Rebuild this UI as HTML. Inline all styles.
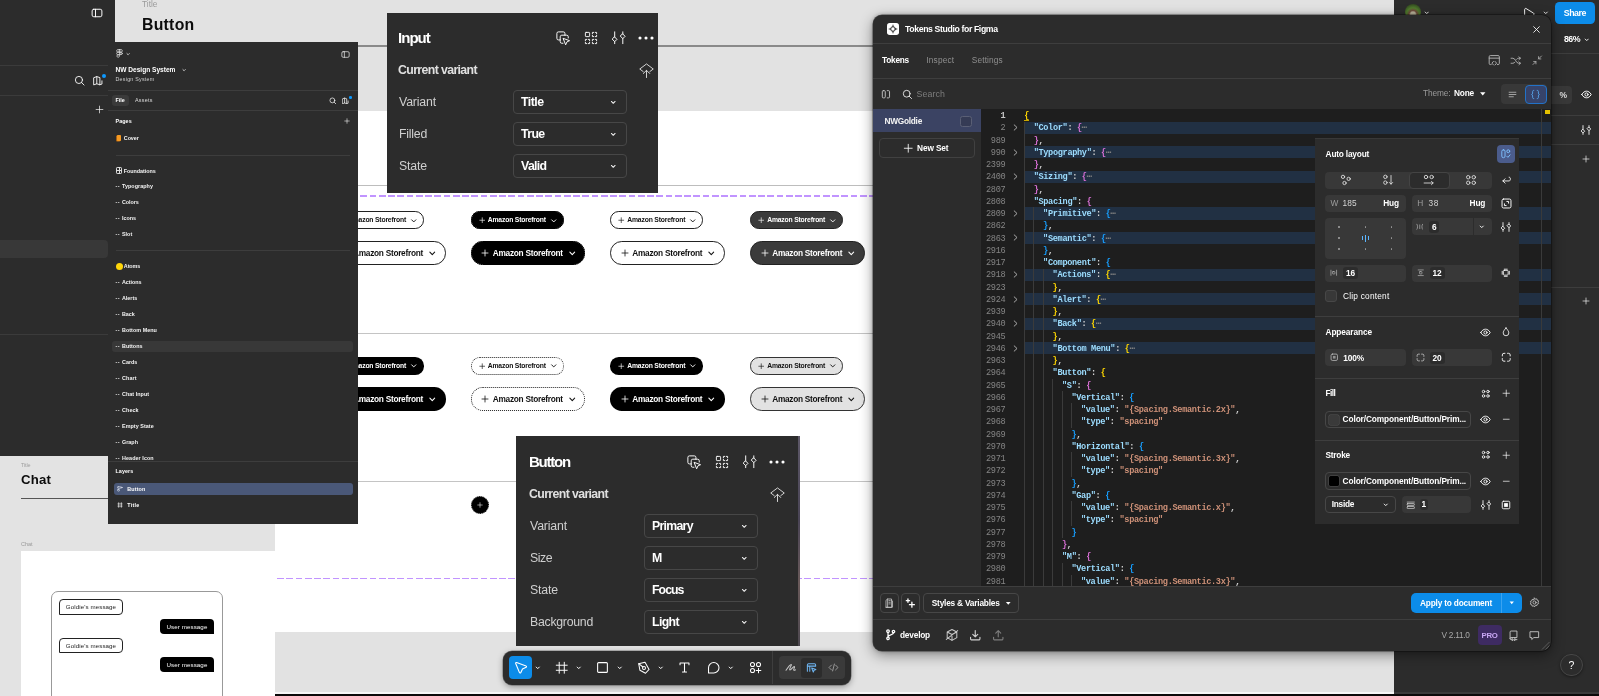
<!DOCTYPE html>
<html lang="en"><head><meta charset="utf-8"><title>Figma – NW Design System – Tokens Studio</title>
<style>
html,body{margin:0;padding:0}
body{width:1599px;height:696px;overflow:hidden;position:relative;background:#e2e2e2;font-family:"Liberation Sans",sans-serif;-webkit-font-smoothing:antialiased}
body div,body span,body svg{position:absolute}
span{white-space:pre;display:block}
#main,#bl,#lp,#ip,#bp,#tb,#tk,#al{left:0;top:0;width:0;height:0;will-change:transform}
.ln{left:0;width:100%;height:12.25px}
.m{font-family:"Liberation Mono","DejaVu Sans Mono",monospace;font-size:8.6px;letter-spacing:-.34px;line-height:12.25px;top:.9px;font-weight:700}
.m.n{font-weight:400}
.m i{font-style:normal}
</style></head><body>
<div id="main">
<div style="left:0px;top:0px;width:115px;height:456px;background:#2c2c2c"></div>
<div style="left:0px;top:65px;width:108px;height:1px;background:#3b3b3b"></div>
<div style="left:0px;top:95px;width:108px;height:1px;background:#3b3b3b"></div>
<div style="left:0px;top:240px;width:108px;height:18px;background:#383838;border-radius:0 4px 4px 0"></div>
<div style="left:0px;top:334px;width:108px;height:1px;background:#3b3b3b"></div>
<svg style="left:91.00px;top:7.00px;color:#fff;" width="12" height="12" viewBox="0 0 16 16" fill="none" stroke="currentColor" stroke-width="1.3" stroke-linecap="round" stroke-linejoin="round"><rect x="1.5" y="3" width="13" height="10" rx="2.2"/><path d="M6 3v10"/></svg>
<svg style="left:73.50px;top:75.00px;color:#fff;" width="11" height="11" viewBox="0 0 16 16" fill="none" stroke="currentColor" stroke-width="1.3" stroke-linecap="round" stroke-linejoin="round"><circle cx="7.2" cy="7.2" r="5.2"/><path d="M11 11l3.600 3.600"/></svg>
<svg style="left:93.00px;top:75.00px;color:#fff;" width="11" height="11" viewBox="0 0 16 16" fill="none" stroke="currentColor" stroke-width="1.3" stroke-linecap="round" stroke-linejoin="round"><path d="M1.500 3.800L5.500 2.300v10.500L1.500 14.200zM5.500 2.300l4.500 1.500v10.400l-4.500-1.400M10 14.200l3-1V8.500"/></svg>
<div style="left:102px;top:74px;width:4px;height:4px;background:#0d99ff;border-radius:50%"></div>
<svg style="left:94.50px;top:105.00px;color:#fff;" width="9" height="9" viewBox="0 0 16 16" fill="none" stroke="currentColor" stroke-width="1.2" stroke-linecap="round" stroke-linejoin="round"><path d="M8 2v12M2 8h12"/></svg>
<span style="left:142.00px;top:-2.20px;font-size:8.3px;line-height:13px;color:#9a9a9a;letter-spacing:0.025px;">Title</span>
<span style="left:142.00px;top:13.00px;font-size:15.8px;line-height:23px;font-weight:700;color:#0c0c0c;letter-spacing:0.268px;">Button</span>
<div style="left:142px;top:45px;width:1252px;height:1.5px;background:#8a8a8a"></div>
<div style="left:120px;top:111px;width:1274px;height:521px;background:#fff"></div>
<div style="left:120px;top:184.5px;width:1274px;height:1px;background:#bdbdbd"></div>
<div style="left:120px;top:332.5px;width:1274px;height:1px;background:#c4c4c4"></div>
<div style="left:120px;top:481px;width:1274px;height:1px;background:#c4c4c4"></div>
<div style="left:120px;top:195.3px;width:1274px;height:1.4px;background:repeating-linear-gradient(90deg,#c194ff 0 6.700px,transparent 6.700px 9.250px)"></div>
<div style="left:120px;top:577.7px;width:1274px;height:1.2px;background:repeating-linear-gradient(90deg,#c194ff 0 6.700px,transparent 6.700px 9.250px)"></div>
<div style="left:331px;top:211.25px;width:93px;height:17.5px;border-radius:8.75px;box-sizing:border-box;background:#fff;border:1px solid #222"></div><svg style="left:338.75px;top:216.75px;color:#111;" width="6.5" height="6.5" viewBox="0 0 16 16" fill="none" stroke="currentColor" stroke-width="1.6" stroke-linecap="round" stroke-linejoin="round"><path d="M8 2v12M2 8h12"/></svg><span style="left:348.00px;top:214.30px;font-size:6.8px;line-height:11px;font-weight:700;color:#111;letter-spacing:-0.188px;">Amazon Storefront</span><svg style="left:409.75px;top:216.55px;color:#111;" width="7.5" height="7.5" viewBox="0 0 16 16" fill="none" stroke="currentColor" stroke-width="2" stroke-linecap="round" stroke-linejoin="round"><path d="M3.500 6l4.500 4.500L12.500 6"/></svg>
<div style="left:331px;top:241.25px;width:114.7px;height:23.5px;border-radius:11.75px;box-sizing:border-box;background:#fff;border:1px solid #222"></div><svg style="left:341.50px;top:249.00px;color:#111;" width="8" height="8" viewBox="0 0 16 16" fill="none" stroke="currentColor" stroke-width="1.6" stroke-linecap="round" stroke-linejoin="round"><path d="M8 2v12M2 8h12"/></svg><span style="left:353.00px;top:246.80px;font-size:8.3px;line-height:13px;font-weight:700;color:#111;letter-spacing:-0.277px;">Amazon Storefront</span><svg style="left:427.75px;top:249.05px;color:#111;" width="8.5" height="8.5" viewBox="0 0 16 16" fill="none" stroke="currentColor" stroke-width="2" stroke-linecap="round" stroke-linejoin="round"><path d="M3.500 6l4.500 4.500L12.500 6"/></svg>
<div style="left:331px;top:357.05px;width:93px;height:17.5px;border-radius:8.75px;box-sizing:border-box;background:#000"></div><svg style="left:338.75px;top:362.55px;color:#fff;" width="6.5" height="6.5" viewBox="0 0 16 16" fill="none" stroke="currentColor" stroke-width="1.6" stroke-linecap="round" stroke-linejoin="round"><path d="M8 2v12M2 8h12"/></svg><span style="left:348.00px;top:360.10px;font-size:6.8px;line-height:11px;font-weight:700;color:#fff;letter-spacing:-0.188px;">Amazon Storefront</span><svg style="left:409.75px;top:362.35px;color:#fff;" width="7.5" height="7.5" viewBox="0 0 16 16" fill="none" stroke="currentColor" stroke-width="2" stroke-linecap="round" stroke-linejoin="round"><path d="M3.500 6l4.500 4.500L12.500 6"/></svg>
<div style="left:331px;top:387.25px;width:114.7px;height:23.5px;border-radius:11.75px;box-sizing:border-box;background:#000"></div><svg style="left:341.50px;top:395.00px;color:#fff;" width="8" height="8" viewBox="0 0 16 16" fill="none" stroke="currentColor" stroke-width="1.6" stroke-linecap="round" stroke-linejoin="round"><path d="M8 2v12M2 8h12"/></svg><span style="left:353.00px;top:392.80px;font-size:8.3px;line-height:13px;font-weight:700;color:#fff;letter-spacing:-0.277px;">Amazon Storefront</span><svg style="left:427.75px;top:395.05px;color:#fff;" width="8.5" height="8.5" viewBox="0 0 16 16" fill="none" stroke="currentColor" stroke-width="2" stroke-linecap="round" stroke-linejoin="round"><path d="M3.500 6l4.500 4.500L12.500 6"/></svg>
<div style="left:470.8px;top:211.25px;width:93px;height:17.5px;border-radius:8.75px;box-sizing:border-box;background:#000;border:1.500px dotted #fff;outline:1px solid #000;outline-offset:-1px"></div><svg style="left:478.55px;top:216.75px;color:#fff;" width="6.5" height="6.5" viewBox="0 0 16 16" fill="none" stroke="currentColor" stroke-width="1.6" stroke-linecap="round" stroke-linejoin="round"><path d="M8 2v12M2 8h12"/></svg><span style="left:487.80px;top:214.30px;font-size:6.8px;line-height:11px;font-weight:700;color:#fff;letter-spacing:-0.188px;">Amazon Storefront</span><svg style="left:549.55px;top:216.55px;color:#fff;" width="7.5" height="7.5" viewBox="0 0 16 16" fill="none" stroke="currentColor" stroke-width="2" stroke-linecap="round" stroke-linejoin="round"><path d="M3.500 6l4.500 4.500L12.500 6"/></svg>
<div style="left:470.8px;top:241.25px;width:114.7px;height:23.5px;border-radius:11.75px;box-sizing:border-box;background:#000;border:1.500px dotted #fff;outline:1px solid #000;outline-offset:-1px"></div><svg style="left:481.30px;top:249.00px;color:#fff;" width="8" height="8" viewBox="0 0 16 16" fill="none" stroke="currentColor" stroke-width="1.6" stroke-linecap="round" stroke-linejoin="round"><path d="M8 2v12M2 8h12"/></svg><span style="left:492.80px;top:246.80px;font-size:8.3px;line-height:13px;font-weight:700;color:#fff;letter-spacing:-0.277px;">Amazon Storefront</span><svg style="left:567.55px;top:249.05px;color:#fff;" width="8.5" height="8.5" viewBox="0 0 16 16" fill="none" stroke="currentColor" stroke-width="2" stroke-linecap="round" stroke-linejoin="round"><path d="M3.500 6l4.500 4.500L12.500 6"/></svg>
<div style="left:470.8px;top:357.05px;width:93px;height:17.5px;border-radius:8.75px;box-sizing:border-box;background:#fff;border:1px dotted #222"></div><svg style="left:478.55px;top:362.55px;color:#111;" width="6.5" height="6.5" viewBox="0 0 16 16" fill="none" stroke="currentColor" stroke-width="1.6" stroke-linecap="round" stroke-linejoin="round"><path d="M8 2v12M2 8h12"/></svg><span style="left:487.80px;top:360.10px;font-size:6.8px;line-height:11px;font-weight:700;color:#111;letter-spacing:-0.188px;">Amazon Storefront</span><svg style="left:549.55px;top:362.35px;color:#111;" width="7.5" height="7.5" viewBox="0 0 16 16" fill="none" stroke="currentColor" stroke-width="2" stroke-linecap="round" stroke-linejoin="round"><path d="M3.500 6l4.500 4.500L12.500 6"/></svg>
<div style="left:470.8px;top:387.25px;width:114.7px;height:23.5px;border-radius:11.75px;box-sizing:border-box;background:#fff;border:1px dotted #222"></div><svg style="left:481.30px;top:395.00px;color:#111;" width="8" height="8" viewBox="0 0 16 16" fill="none" stroke="currentColor" stroke-width="1.6" stroke-linecap="round" stroke-linejoin="round"><path d="M8 2v12M2 8h12"/></svg><span style="left:492.80px;top:392.80px;font-size:8.3px;line-height:13px;font-weight:700;color:#111;letter-spacing:-0.277px;">Amazon Storefront</span><svg style="left:567.55px;top:395.05px;color:#111;" width="8.5" height="8.5" viewBox="0 0 16 16" fill="none" stroke="currentColor" stroke-width="2" stroke-linecap="round" stroke-linejoin="round"><path d="M3.500 6l4.500 4.500L12.500 6"/></svg>
<div style="left:610.3px;top:211.25px;width:93px;height:17.5px;border-radius:8.75px;box-sizing:border-box;background:#fff;border:1px solid #222"></div><svg style="left:618.05px;top:216.75px;color:#111;" width="6.5" height="6.5" viewBox="0 0 16 16" fill="none" stroke="currentColor" stroke-width="1.6" stroke-linecap="round" stroke-linejoin="round"><path d="M8 2v12M2 8h12"/></svg><span style="left:627.30px;top:214.30px;font-size:6.8px;line-height:11px;font-weight:700;color:#111;letter-spacing:-0.188px;">Amazon Storefront</span><svg style="left:689.05px;top:216.55px;color:#111;" width="7.5" height="7.5" viewBox="0 0 16 16" fill="none" stroke="currentColor" stroke-width="2" stroke-linecap="round" stroke-linejoin="round"><path d="M3.500 6l4.500 4.500L12.500 6"/></svg>
<div style="left:610.3px;top:241.25px;width:114.7px;height:23.5px;border-radius:11.75px;box-sizing:border-box;background:#fff;border:1px solid #222"></div><svg style="left:620.80px;top:249.00px;color:#111;" width="8" height="8" viewBox="0 0 16 16" fill="none" stroke="currentColor" stroke-width="1.6" stroke-linecap="round" stroke-linejoin="round"><path d="M8 2v12M2 8h12"/></svg><span style="left:632.30px;top:246.80px;font-size:8.3px;line-height:13px;font-weight:700;color:#111;letter-spacing:-0.277px;">Amazon Storefront</span><svg style="left:707.05px;top:249.05px;color:#111;" width="8.5" height="8.5" viewBox="0 0 16 16" fill="none" stroke="currentColor" stroke-width="2" stroke-linecap="round" stroke-linejoin="round"><path d="M3.500 6l4.500 4.500L12.500 6"/></svg>
<div style="left:610.3px;top:357.05px;width:93px;height:17.5px;border-radius:8.75px;box-sizing:border-box;background:#000"></div><svg style="left:618.05px;top:362.55px;color:#fff;" width="6.5" height="6.5" viewBox="0 0 16 16" fill="none" stroke="currentColor" stroke-width="1.6" stroke-linecap="round" stroke-linejoin="round"><path d="M8 2v12M2 8h12"/></svg><span style="left:627.30px;top:360.10px;font-size:6.8px;line-height:11px;font-weight:700;color:#fff;letter-spacing:-0.188px;">Amazon Storefront</span><svg style="left:689.05px;top:362.35px;color:#fff;" width="7.5" height="7.5" viewBox="0 0 16 16" fill="none" stroke="currentColor" stroke-width="2" stroke-linecap="round" stroke-linejoin="round"><path d="M3.500 6l4.500 4.500L12.500 6"/></svg>
<div style="left:610.3px;top:387.25px;width:114.7px;height:23.5px;border-radius:11.75px;box-sizing:border-box;background:#000"></div><svg style="left:620.80px;top:395.00px;color:#fff;" width="8" height="8" viewBox="0 0 16 16" fill="none" stroke="currentColor" stroke-width="1.6" stroke-linecap="round" stroke-linejoin="round"><path d="M8 2v12M2 8h12"/></svg><span style="left:632.30px;top:392.80px;font-size:8.3px;line-height:13px;font-weight:700;color:#fff;letter-spacing:-0.277px;">Amazon Storefront</span><svg style="left:707.05px;top:395.05px;color:#fff;" width="8.5" height="8.5" viewBox="0 0 16 16" fill="none" stroke="currentColor" stroke-width="2" stroke-linecap="round" stroke-linejoin="round"><path d="M3.500 6l4.500 4.500L12.500 6"/></svg>
<div style="left:750.2px;top:211.25px;width:93px;height:17.5px;border-radius:8.75px;box-sizing:border-box;background:#3b3b3b;border:1px solid #222"></div><svg style="left:757.95px;top:216.75px;color:#fff;" width="6.5" height="6.5" viewBox="0 0 16 16" fill="none" stroke="currentColor" stroke-width="1.6" stroke-linecap="round" stroke-linejoin="round"><path d="M8 2v12M2 8h12"/></svg><span style="left:767.20px;top:214.30px;font-size:6.8px;line-height:11px;font-weight:700;color:#fff;letter-spacing:-0.188px;">Amazon Storefront</span><svg style="left:828.95px;top:216.55px;color:#fff;" width="7.5" height="7.5" viewBox="0 0 16 16" fill="none" stroke="currentColor" stroke-width="2" stroke-linecap="round" stroke-linejoin="round"><path d="M3.500 6l4.500 4.500L12.500 6"/></svg>
<div style="left:750.2px;top:241.25px;width:114.7px;height:23.5px;border-radius:11.75px;box-sizing:border-box;background:#3b3b3b;border:1px solid #222"></div><svg style="left:760.70px;top:249.00px;color:#fff;" width="8" height="8" viewBox="0 0 16 16" fill="none" stroke="currentColor" stroke-width="1.6" stroke-linecap="round" stroke-linejoin="round"><path d="M8 2v12M2 8h12"/></svg><span style="left:772.20px;top:246.80px;font-size:8.3px;line-height:13px;font-weight:700;color:#fff;letter-spacing:-0.277px;">Amazon Storefront</span><svg style="left:846.95px;top:249.05px;color:#fff;" width="8.5" height="8.5" viewBox="0 0 16 16" fill="none" stroke="currentColor" stroke-width="2" stroke-linecap="round" stroke-linejoin="round"><path d="M3.500 6l4.500 4.500L12.500 6"/></svg>
<div style="left:750.2px;top:357.05px;width:93px;height:17.5px;border-radius:8.75px;box-sizing:border-box;background:#e2e2e2;border:1px solid #333"></div><svg style="left:757.95px;top:362.55px;color:#111;" width="6.5" height="6.5" viewBox="0 0 16 16" fill="none" stroke="currentColor" stroke-width="1.6" stroke-linecap="round" stroke-linejoin="round"><path d="M8 2v12M2 8h12"/></svg><span style="left:767.20px;top:360.10px;font-size:6.8px;line-height:11px;font-weight:700;color:#111;letter-spacing:-0.188px;">Amazon Storefront</span><svg style="left:828.95px;top:362.35px;color:#111;" width="7.5" height="7.5" viewBox="0 0 16 16" fill="none" stroke="currentColor" stroke-width="2" stroke-linecap="round" stroke-linejoin="round"><path d="M3.500 6l4.500 4.500L12.500 6"/></svg>
<div style="left:750.2px;top:387.25px;width:114.7px;height:23.5px;border-radius:11.75px;box-sizing:border-box;background:#e2e2e2;border:1px solid #333"></div><svg style="left:760.70px;top:395.00px;color:#111;" width="8" height="8" viewBox="0 0 16 16" fill="none" stroke="currentColor" stroke-width="1.6" stroke-linecap="round" stroke-linejoin="round"><path d="M8 2v12M2 8h12"/></svg><span style="left:772.20px;top:392.80px;font-size:8.3px;line-height:13px;font-weight:700;color:#111;letter-spacing:-0.277px;">Amazon Storefront</span><svg style="left:846.95px;top:395.05px;color:#111;" width="8.5" height="8.5" viewBox="0 0 16 16" fill="none" stroke="currentColor" stroke-width="2" stroke-linecap="round" stroke-linejoin="round"><path d="M3.500 6l4.500 4.500L12.500 6"/></svg>
<div style="left:471px;top:496px;width:18px;height:18px;background:#000;border-radius:50%;border:1px dotted #777;box-sizing:border-box"></div>
<svg style="left:477.00px;top:502.00px;color:#fff;" width="6" height="6" viewBox="0 0 16 16" fill="none" stroke="currentColor" stroke-width="1.5" stroke-linecap="round" stroke-linejoin="round"><path d="M8 2v12M2 8h12"/></svg>
<div style="left:1394px;top:0px;width:205px;height:696px;background:#2c2c2c"></div>
<div style="left:1394px;top:53px;width:205px;height:1px;background:#3d3d3d"></div>
<div style="left:1551px;top:115px;width:48px;height:1px;background:#3d3d3d"></div>
<div style="left:1551px;top:144px;width:48px;height:1px;background:#3d3d3d"></div>
<div style="left:1551px;top:287px;width:48px;height:1px;background:#3d3d3d"></div>
<div style="left:1404.500px;top:4px;width:16px;height:16px;border-radius:50%;background:radial-gradient(circle at 50% 65%,#b9b39a 0 18%,#6c4a3a 30%,#4f7a2c 50%,#2c3d1e 85%)"></div>
<svg style="left:1423.75px;top:10.25px;color:#fff;" width="5.5" height="5.5" viewBox="0 0 16 16" fill="none" stroke="currentColor" stroke-width="2.6" stroke-linecap="round" stroke-linejoin="round"><path d="M3.500 6l4.500 4.500L12.500 6"/></svg>
<svg style="left:1522.00px;top:6.80px;color:#fff;" width="14" height="14" viewBox="0 0 16 16" fill="none" stroke="currentColor" stroke-width="1.1" stroke-linecap="round" stroke-linejoin="round"><path d="M3 2.800c0-1 .9-1.500 1.700-1l8.500 5.200c.8.500.8 1.500 0 2l-8.500 5.200c-.8.500-1.700 0-1.700-1z"/></svg>
<svg style="left:1543.25px;top:10.25px;color:#fff;" width="5.5" height="5.5" viewBox="0 0 16 16" fill="none" stroke="currentColor" stroke-width="2.6" stroke-linecap="round" stroke-linejoin="round"><path d="M3.500 6l4.500 4.500L12.500 6"/></svg>
<div style="left:1555px;top:1.7px;width:39.6px;height:22.8px;background:#0c8ce9;border-radius:4.500px"></div>
<span style="left:1563.80px;top:6.80px;font-size:8.8px;line-height:13px;font-weight:700;color:#fff;letter-spacing:-0.492px;">Share</span>
<span style="left:1564.00px;top:32.80px;font-size:8.8px;line-height:13px;font-weight:700;color:#fff;letter-spacing:-0.538px;">86%</span>
<svg style="left:1583.75px;top:36.75px;color:#fff;" width="5.5" height="5.5" viewBox="0 0 16 16" fill="none" stroke="currentColor" stroke-width="2.6" stroke-linecap="round" stroke-linejoin="round"><path d="M3.500 6l4.500 4.500L12.500 6"/></svg>
<div style="left:1540px;top:86px;width:31.5px;height:17.5px;background:#383838;border-radius:4px"></div>
<span style="left:1559.50px;top:88.60px;font-size:8.5px;line-height:13px;font-weight:700;color:#ddd;">%</span>
<svg style="left:1580.50px;top:89.30px;color:#fff;" width="11" height="11" viewBox="0 0 16 16" fill="none" stroke="currentColor" stroke-width="1.4" stroke-linecap="round" stroke-linejoin="round"><path d="M1.200 8C3 4.600 5.500 3.200 8 3.200S13 4.600 14.800 8C13 11.400 10.500 12.800 8 12.800S3 11.400 1.200 8z"/><circle cx="8" cy="8" r="2.300"/></svg>
<svg style="left:1581.00px;top:125.00px;color:#fff;" width="10" height="10" viewBox="0 0 16 16" fill="none" stroke="currentColor" stroke-width="1.4" stroke-linecap="round" stroke-linejoin="round"><path d="M3.200 1v6.200M3.200 12.600V15M12.800 1v2.600M12.800 9v6"/><path d="M3.200 7.200l2.700 2.700-2.700 2.700L.5 9.900zM12.800 3.600l2.700 2.700-2.700 2.700-2.700-2.700z"/></svg>
<svg style="left:1582.00px;top:155.00px;color:#fff;" width="8" height="8" viewBox="0 0 16 16" fill="none" stroke="currentColor" stroke-width="1.3" stroke-linecap="round" stroke-linejoin="round"><path d="M8 2v12M2 8h12"/></svg>
<svg style="left:1582.00px;top:297.00px;color:#fff;" width="8" height="8" viewBox="0 0 16 16" fill="none" stroke="currentColor" stroke-width="1.3" stroke-linecap="round" stroke-linejoin="round"><path d="M8 2v12M2 8h12"/></svg>
<div style="left:1560px;top:653.5px;width:22.5px;height:22.5px;background:#2c2c2c;border:1px solid #474747;border-radius:50%;box-sizing:border-box;box-shadow:0 1px 3px rgba(0,0,0,.4)"></div>
<span style="left:1568.38px;top:657.30px;font-size:10.5px;line-height:16px;color:#fff;">?</span>
</div>
<div id="bl">
<div style="left:0px;top:456px;width:275px;height:240px;background:#e3e3e3"></div>
<span style="left:21.00px;top:460.80px;font-size:5.5px;line-height:9px;color:#a0a0a0;letter-spacing:-0.137px;">Title</span>
<span style="left:21.00px;top:470.30px;font-size:13.2px;line-height:19px;font-weight:700;color:#0c0c0c;letter-spacing:0.167px;">Chat</span>
<div style="left:21px;top:497.5px;width:254px;height:1px;background:#555"></div>
<span style="left:21.00px;top:539.80px;font-size:5.5px;line-height:9px;color:#9a9a9a;letter-spacing:-0.029px;">Chat</span>
<div style="left:21px;top:551px;width:254px;height:145px;background:#fff"></div>
<div style="left:51px;top:591px;width:171.5px;height:120px;border:1px solid #999;border-radius:7px;box-sizing:border-box"></div>
<div style="left:59px;top:599.3px;width:64px;height:15.5px;border:1px solid #222;border-radius:4px 4px 4px 0;box-sizing:border-box;background:#fff"></div>
<span style="left:65.75px;top:602.40px;font-size:6.2px;line-height:10px;color:#222;letter-spacing:0.088px;">Goldie's message</span>
<div style="left:160px;top:618.8px;width:54px;height:15.5px;background:#000;border-radius:4px 4px 0 4px"></div>
<span style="left:166.50px;top:621.90px;font-size:6.2px;line-height:10px;color:#fff;letter-spacing:0.086px;">User message</span>
<div style="left:59px;top:637.8px;width:64px;height:15.5px;border:1px solid #222;border-radius:4px 4px 4px 0;box-sizing:border-box;background:#fff"></div>
<span style="left:65.75px;top:640.90px;font-size:6.2px;line-height:10px;color:#222;letter-spacing:0.088px;">Goldie's message</span>
<div style="left:160px;top:656.8px;width:54px;height:15.5px;background:#000;border-radius:4px 4px 0 4px"></div>
<span style="left:166.50px;top:659.90px;font-size:6.2px;line-height:10px;color:#fff;letter-spacing:0.086px;">User message</span>
</div>
<div id="lp">
<div style="left:108px;top:42px;width:249.5px;height:481.5px;background:#2c2c2c"></div>
<svg style="left:115.10px;top:49.00px;color:#e8e8e8;" width="9" height="9" viewBox="0 0 16 16" fill="none" stroke="currentColor" stroke-width="1.2" stroke-linecap="round" stroke-linejoin="round"><path d="M8 1H5.200a2.300 2.300 0 0 0 0 4.600H8zM8 1h2.800a2.300 2.300 0 0 1 0 4.600H8zM8 5.600H5.200a2.300 2.300 0 0 0 0 4.600H8zM8 10.200H5.200A2.300 2.300 0 1 0 8 12.500z"/><circle cx="10.600" cy="7.900" r="2.300"/></svg>
<svg style="left:125.70px;top:52.20px;color:#fff;" width="4.2" height="4.2" viewBox="0 0 16 16" fill="none" stroke="currentColor" stroke-width="2.8" stroke-linecap="round" stroke-linejoin="round"><path d="M3.500 6l4.500 4.500L12.500 6"/></svg>
<svg style="left:340.50px;top:49.50px;color:#e8e8e8;" width="9" height="9" viewBox="0 0 16 16" fill="none" stroke="currentColor" stroke-width="1.3" stroke-linecap="round" stroke-linejoin="round"><rect x="1.5" y="3" width="13" height="10" rx="2.2"/><path d="M6 3v10"/></svg>
<span style="left:115.50px;top:64.40px;font-size:6.6px;line-height:11px;font-weight:700;color:#fff;letter-spacing:-0.009px;">NW Design System</span>
<svg style="left:182.20px;top:68.20px;color:#fff;" width="4.2" height="4.2" viewBox="0 0 16 16" fill="none" stroke="currentColor" stroke-width="2.8" stroke-linecap="round" stroke-linejoin="round"><path d="M3.500 6l4.500 4.500L12.500 6"/></svg>
<span style="left:115.50px;top:75.40px;font-size:5.3px;line-height:9px;color:#d0d0d0;letter-spacing:0.258px;">Design System</span>
<div style="left:108px;top:89.5px;width:249.5px;height:1px;background:#3d3d3d"></div>
<div style="left:111.5px;top:94.5px;width:17.5px;height:11.5px;background:#3a3a3a;border-radius:3px"></div>
<span style="left:115.50px;top:96.10px;font-size:5.4px;line-height:9px;font-weight:700;color:#fff;letter-spacing:-0.001px;">File</span>
<span style="left:135.00px;top:96.10px;font-size:5.4px;line-height:9px;color:#ddd;letter-spacing:0.266px;">Assets</span>
<svg style="left:329.25px;top:96.55px;color:#fff;" width="7.5" height="7.5" viewBox="0 0 16 16" fill="none" stroke="currentColor" stroke-width="1.5" stroke-linecap="round" stroke-linejoin="round"><circle cx="7.2" cy="7.2" r="5.2"/><path d="M11 11l3.600 3.600"/></svg>
<svg style="left:342.25px;top:96.55px;color:#fff;" width="7.5" height="7.5" viewBox="0 0 16 16" fill="none" stroke="currentColor" stroke-width="1.5" stroke-linecap="round" stroke-linejoin="round"><path d="M1.500 3.800L5.500 2.300v10.500L1.500 14.200zM5.500 2.300l4.500 1.500v10.400l-4.500-1.400M10 14.200l3-1V8.500"/></svg>
<div style="left:349px;top:96px;width:2.5px;height:2.5px;background:#0d99ff;border-radius:50%"></div>
<div style="left:108px;top:110px;width:249.5px;height:1px;background:#3d3d3d"></div>
<span style="left:115.50px;top:116.50px;font-size:5.4px;line-height:9px;font-weight:700;color:#fff;letter-spacing:0.078px;">Pages</span>
<svg style="left:343.50px;top:117.50px;color:#fff;" width="6" height="6" viewBox="0 0 16 16" fill="none" stroke="currentColor" stroke-width="1.5" stroke-linecap="round" stroke-linejoin="round"><path d="M8 2v12M2 8h12"/></svg>
<div style="left:117px;top:135.2px;width:3.8px;height:5.6px;background:#f59a23;border-radius:.8px;box-shadow:-.8px .5px 0 #c46e10"></div>
<span style="left:123.80px;top:134.40px;font-size:5.4px;line-height:9px;font-weight:700;color:#f3f3f3;letter-spacing:-0.061px;">Cover</span>
<div style="left:115.5px;top:154.5px;width:234px;height:1px;background:#3d3d3d"></div>
<div style="left:115.7px;top:167.3px;width:6.6px;height:6.6px;border:1px solid #ddd;border-radius:1.200px;box-sizing:border-box"></div>
<div style="left:118.6px;top:167.8px;width:0.8px;height:5.8px;background:#ddd"></div>
<div style="left:116px;top:170.2px;width:6px;height:0.8px;background:#ddd"></div>
<span style="left:123.80px;top:166.50px;font-size:5.4px;line-height:9px;font-weight:700;color:#f3f3f3;letter-spacing:-0.036px;">Foundations</span>
<span style="left:115.50px;top:181.90px;font-size:5.4px;line-height:9px;font-weight:700;color:#e6e6e6;letter-spacing:0.502px;">--</span>
<span style="left:122.00px;top:181.90px;font-size:5.4px;line-height:9px;font-weight:700;color:#f3f3f3;letter-spacing:0.050px;">Typography</span>
<span style="left:115.50px;top:197.90px;font-size:5.4px;line-height:9px;font-weight:700;color:#e6e6e6;letter-spacing:0.502px;">--</span>
<span style="left:122.00px;top:197.90px;font-size:5.4px;line-height:9px;font-weight:700;color:#f3f3f3;letter-spacing:-0.050px;">Colors</span>
<span style="left:115.50px;top:213.90px;font-size:5.4px;line-height:9px;font-weight:700;color:#e6e6e6;letter-spacing:0.502px;">--</span>
<span style="left:122.00px;top:213.90px;font-size:5.4px;line-height:9px;font-weight:700;color:#f3f3f3;letter-spacing:-0.021px;">Icons</span>
<span style="left:115.50px;top:229.90px;font-size:5.4px;line-height:9px;font-weight:700;color:#e6e6e6;letter-spacing:0.502px;">--</span>
<span style="left:122.00px;top:229.90px;font-size:5.4px;line-height:9px;font-weight:700;color:#f3f3f3;letter-spacing:0.000px;">Slot</span>
<div style="left:115.5px;top:250px;width:234px;height:1px;background:#3d3d3d"></div>
<div style="left:115.6px;top:263.2px;width:7px;height:7px;background:#ffd60a;border-radius:50%"></div>
<span style="left:123.80px;top:262.40px;font-size:5.4px;line-height:9px;font-weight:700;color:#f3f3f3;letter-spacing:-0.060px;">Atoms</span>
<div style="left:111.5px;top:340.5px;width:241.5px;height:11.7px;background:#383838;border-radius:3px"></div>
<span style="left:115.50px;top:277.90px;font-size:5.4px;line-height:9px;font-weight:700;color:#e6e6e6;letter-spacing:0.502px;">--</span>
<span style="left:122.00px;top:277.90px;font-size:5.4px;line-height:9px;font-weight:700;color:#f3f3f3;letter-spacing:-0.043px;">Actions</span>
<span style="left:115.50px;top:293.90px;font-size:5.4px;line-height:9px;font-weight:700;color:#e6e6e6;letter-spacing:0.502px;">--</span>
<span style="left:122.00px;top:293.90px;font-size:5.4px;line-height:9px;font-weight:700;color:#f3f3f3;letter-spacing:-0.018px;">Alerts</span>
<span style="left:115.50px;top:309.90px;font-size:5.4px;line-height:9px;font-weight:700;color:#e6e6e6;letter-spacing:0.502px;">--</span>
<span style="left:122.00px;top:309.90px;font-size:5.4px;line-height:9px;font-weight:700;color:#f3f3f3;letter-spacing:-0.052px;">Back</span>
<span style="left:115.50px;top:325.90px;font-size:5.4px;line-height:9px;font-weight:700;color:#e6e6e6;letter-spacing:0.502px;">--</span>
<span style="left:122.00px;top:325.90px;font-size:5.4px;line-height:9px;font-weight:700;color:#f3f3f3;letter-spacing:0.046px;">Bottom Menu</span>
<span style="left:115.50px;top:341.90px;font-size:5.4px;line-height:9px;font-weight:700;color:#e6e6e6;letter-spacing:0.502px;">--</span>
<span style="left:122.00px;top:341.90px;font-size:5.4px;line-height:9px;font-weight:700;color:#f3f3f3;letter-spacing:0.015px;">Buttons</span>
<span style="left:115.50px;top:357.90px;font-size:5.4px;line-height:9px;font-weight:700;color:#e6e6e6;letter-spacing:0.502px;">--</span>
<span style="left:122.00px;top:357.90px;font-size:5.4px;line-height:9px;font-weight:700;color:#f3f3f3;letter-spacing:-0.001px;">Cards</span>
<span style="left:115.50px;top:373.90px;font-size:5.4px;line-height:9px;font-weight:700;color:#e6e6e6;letter-spacing:0.502px;">--</span>
<span style="left:122.00px;top:373.90px;font-size:5.4px;line-height:9px;font-weight:700;color:#f3f3f3;letter-spacing:0.100px;">Chart</span>
<span style="left:115.50px;top:389.90px;font-size:5.4px;line-height:9px;font-weight:700;color:#e6e6e6;letter-spacing:0.502px;">--</span>
<span style="left:122.00px;top:389.90px;font-size:5.4px;line-height:9px;font-weight:700;color:#f3f3f3;letter-spacing:0.051px;">Chat Input</span>
<span style="left:115.50px;top:405.90px;font-size:5.4px;line-height:9px;font-weight:700;color:#e6e6e6;letter-spacing:0.502px;">--</span>
<span style="left:122.00px;top:405.90px;font-size:5.4px;line-height:9px;font-weight:700;color:#f3f3f3;letter-spacing:0.098px;">Check</span>
<span style="left:115.50px;top:421.90px;font-size:5.4px;line-height:9px;font-weight:700;color:#e6e6e6;letter-spacing:0.502px;">--</span>
<span style="left:122.00px;top:421.90px;font-size:5.4px;line-height:9px;font-weight:700;color:#f3f3f3;letter-spacing:0.054px;">Empty State</span>
<span style="left:115.50px;top:437.90px;font-size:5.4px;line-height:9px;font-weight:700;color:#e6e6e6;letter-spacing:0.502px;">--</span>
<span style="left:122.00px;top:437.90px;font-size:5.4px;line-height:9px;font-weight:700;color:#f3f3f3;letter-spacing:0.020px;">Graph</span>
<div style="left:108px;top:452.6px;width:240px;height:8.300px;overflow:hidden"><span style="left:7.50px;top:1.80px;font-size:5.4px;line-height:9px;font-weight:700;color:#e6e6e6;letter-spacing:0.502px;">--</span><span style="left:14.00px;top:1.80px;font-size:5.4px;line-height:9px;font-weight:700;color:#f3f3f3;letter-spacing:0.081px;">Header Icon</span></div>
<div style="left:108px;top:460.5px;width:249.5px;height:1px;background:#3d3d3d"></div>
<span style="left:115.50px;top:467.00px;font-size:5.4px;line-height:9px;font-weight:700;color:#fff;letter-spacing:0.064px;">Layers</span>
<div style="left:113.5px;top:483px;width:239.5px;height:12px;background:#4a5878;border-radius:3px"></div>
<svg style="left:116.50px;top:486.00px;color:#dfe4f0;" width="6" height="6" viewBox="0 0 16 16" fill="none" stroke="currentColor" stroke-width="1.8" stroke-linecap="round" stroke-linejoin="round"><rect x="1.500" y="2" width="9" height="4" rx="1.500"/><rect x="1.500" y="9" width="5" height="4.500" rx="1.500"/><circle cx="12.500" cy="4" r="1.300"/></svg>
<span style="left:127.30px;top:485.00px;font-size:5.4px;line-height:9px;font-weight:700;color:#fff;letter-spacing:0.135px;">Button</span>
<svg style="left:116.50px;top:502.00px;color:#e8e8e8;" width="6" height="6" viewBox="0 0 16 16" fill="none" stroke="currentColor" stroke-width="2" stroke-linecap="round" stroke-linejoin="round"><path d="M4.500 2v12M11.500 2v12M2.500 5h4M2.500 11h4M9.500 5h4M9.500 11h4"/></svg>
<span style="left:127.30px;top:501.00px;font-size:5.4px;line-height:9px;font-weight:700;color:#fff;letter-spacing:0.239px;">Title</span>
</div>
<div id="ip">
<div style="left:387px;top:13px;width:271px;height:180px;background:#2c2c2c"></div>
<span style="left:398.00px;top:27.30px;font-size:15px;line-height:22px;font-weight:700;color:#fff;letter-spacing:-0.970px;">Input</span>
<svg style="left:556.00px;top:31.00px;color:#fff;" width="14" height="14" viewBox="0 0 16 16" fill="none" stroke="currentColor" stroke-width="1.1" stroke-linecap="round" stroke-linejoin="round"><path d="M4.800 10.200H2.800A1.800 1.800 0 0 1 1 8.400V2.800A1.800 1.800 0 0 1 2.800 1h5.600a1.800 1.800 0 0 1 1.800 1.800v2"/><path d="M8 14H6.600a1.800 1.800 0 0 1-1.800-1.800V6.600a1.800 1.800 0 0 1 1.800-1.800h5.600A1.800 1.800 0 0 1 14 6.600V8"/><path d="M8.500 8.500l7 2.600-3 1.300-1.300 3z"/></svg>
<svg style="left:584.00px;top:31.00px;color:#fff;" width="14" height="14" viewBox="0 0 16 16" fill="none" stroke="currentColor" stroke-width="1.05" stroke-linecap="round" stroke-linejoin="round"><rect x="1.600" y="1.600" width="4.800" height="4.800" rx=".8"/><path d="M9.6 3.1V1.6h1.5M12.899999999999999 1.6h1.5v1.5M14.399999999999999 4.9v1.5h-1.5M11.1 6.4h-1.5v-1.5M1.6 11.1V9.6h1.5M4.9 9.6h1.5v1.5M6.4 12.899999999999999v1.5h-1.5M3.1 14.399999999999999h-1.5v-1.5M9.6 11.1V9.6h1.5M12.899999999999999 9.6h1.5v1.5M14.399999999999999 12.899999999999999v1.5h-1.5M11.1 14.399999999999999h-1.5v-1.5"/></svg>
<svg style="left:612.25px;top:31.25px;color:#fff;" width="13.5" height="13.5" viewBox="0 0 16 16" fill="none" stroke="currentColor" stroke-width="1.15" stroke-linecap="round" stroke-linejoin="round"><path d="M3.200 1v6.200M3.200 12.600V15M12.800 1v2.600M12.800 9v6"/><path d="M3.200 7.200l2.700 2.700-2.700 2.700L.5 9.900zM12.800 3.600l2.700 2.700-2.700 2.700-2.700-2.700z"/></svg>
<svg style="left:638.00px;top:30.00px;color:#fff;" width="16" height="16" viewBox="0 0 16 16" fill="none" stroke="currentColor" stroke-width="1" stroke-linecap="round" stroke-linejoin="round"><circle cx="2" cy="8" r="1.550" fill="currentColor" stroke="none"/><circle cx="8" cy="8" r="1.550" fill="currentColor" stroke="none"/><circle cx="14" cy="8" r="1.550" fill="currentColor" stroke="none"/></svg>
<span style="left:398.00px;top:61.30px;font-size:12.3px;line-height:18px;font-weight:700;color:#e0e0e0;letter-spacing:-0.612px;">Current variant</span>
<svg style="left:638.50px;top:62.80px;color:#e6e6e6;" width="15" height="15" viewBox="0 0 16 16" fill="none" stroke="currentColor" stroke-width="0.95" stroke-linecap="round" stroke-linejoin="round"><path d="M8 15.500V8M4.600 11.200L8 7.800l3.400 3.400"/><path d="M4.500 9.200L.8 6.400 8 1l7.200 5.400-3.700 2.800"/></svg>
<span style="left:399.00px;top:93.20px;font-size:12.3px;line-height:18px;color:#cfcfcf;letter-spacing:-0.152px;">Variant</span>
<div style="left:513px;top:90.3px;width:113.5px;height:23.3px;border:1px solid #474747;border-radius:4px;box-sizing:border-box"></div>
<span style="left:521.00px;top:93.20px;font-size:12.3px;line-height:18px;font-weight:700;color:#fff;letter-spacing:-0.513px;">Title</span>
<svg style="left:609.95px;top:99.25px;color:#f0f0f0;" width="6.5" height="6.5" viewBox="0 0 16 16" fill="none" stroke="currentColor" stroke-width="2.6" stroke-linecap="round" stroke-linejoin="round"><path d="M3.500 6l4.500 4.500L12.500 6"/></svg>
<span style="left:399.00px;top:125.20px;font-size:12.3px;line-height:18px;color:#cfcfcf;letter-spacing:-0.232px;">Filled</span>
<div style="left:513px;top:122.3px;width:113.5px;height:23.3px;border:1px solid #474747;border-radius:4px;box-sizing:border-box"></div>
<span style="left:521.00px;top:125.20px;font-size:12.3px;line-height:18px;font-weight:700;color:#fff;letter-spacing:-0.619px;">True</span>
<svg style="left:609.95px;top:131.25px;color:#f0f0f0;" width="6.5" height="6.5" viewBox="0 0 16 16" fill="none" stroke="currentColor" stroke-width="2.6" stroke-linecap="round" stroke-linejoin="round"><path d="M3.500 6l4.500 4.500L12.500 6"/></svg>
<span style="left:399.00px;top:157.20px;font-size:12.3px;line-height:18px;color:#cfcfcf;letter-spacing:-0.144px;">State</span>
<div style="left:513px;top:154.3px;width:113.5px;height:23.3px;border:1px solid #474747;border-radius:4px;box-sizing:border-box"></div>
<span style="left:521.00px;top:157.20px;font-size:12.3px;line-height:18px;font-weight:700;color:#fff;letter-spacing:-0.643px;">Valid</span>
<svg style="left:609.95px;top:163.25px;color:#f0f0f0;" width="6.5" height="6.5" viewBox="0 0 16 16" fill="none" stroke="currentColor" stroke-width="2.6" stroke-linecap="round" stroke-linejoin="round"><path d="M3.500 6l4.500 4.500L12.500 6"/></svg>
</div>
<div id="bp">
<div style="left:516px;top:436px;width:284px;height:210px;background:#2c2c2c"></div>
<span style="left:529.00px;top:450.90px;font-size:15px;line-height:22px;font-weight:700;color:#fff;letter-spacing:-1.219px;">Button</span>
<svg style="left:687.00px;top:455.00px;color:#fff;" width="14" height="14" viewBox="0 0 16 16" fill="none" stroke="currentColor" stroke-width="1.1" stroke-linecap="round" stroke-linejoin="round"><path d="M4.800 10.200H2.800A1.800 1.800 0 0 1 1 8.400V2.800A1.800 1.800 0 0 1 2.800 1h5.600a1.800 1.800 0 0 1 1.800 1.800v2"/><path d="M8 14H6.600a1.800 1.800 0 0 1-1.800-1.800V6.600a1.800 1.800 0 0 1 1.800-1.800h5.600A1.800 1.800 0 0 1 14 6.600V8"/><path d="M8.500 8.500l7 2.600-3 1.300-1.300 3z"/></svg>
<svg style="left:715.00px;top:455.00px;color:#fff;" width="14" height="14" viewBox="0 0 16 16" fill="none" stroke="currentColor" stroke-width="1.05" stroke-linecap="round" stroke-linejoin="round"><rect x="1.600" y="1.600" width="4.800" height="4.800" rx=".8"/><path d="M9.6 3.1V1.6h1.5M12.899999999999999 1.6h1.5v1.5M14.399999999999999 4.9v1.5h-1.5M11.1 6.4h-1.5v-1.5M1.6 11.1V9.6h1.5M4.9 9.6h1.5v1.5M6.4 12.899999999999999v1.5h-1.5M3.1 14.399999999999999h-1.5v-1.5M9.6 11.1V9.6h1.5M12.899999999999999 9.6h1.5v1.5M14.399999999999999 12.899999999999999v1.5h-1.5M11.1 14.399999999999999h-1.5v-1.5"/></svg>
<svg style="left:743.25px;top:455.25px;color:#fff;" width="13.5" height="13.5" viewBox="0 0 16 16" fill="none" stroke="currentColor" stroke-width="1.15" stroke-linecap="round" stroke-linejoin="round"><path d="M3.200 1v6.200M3.200 12.600V15M12.800 1v2.600M12.800 9v6"/><path d="M3.200 7.200l2.700 2.700-2.700 2.700L.5 9.900zM12.800 3.600l2.700 2.700-2.700 2.700-2.700-2.700z"/></svg>
<svg style="left:769.00px;top:454.00px;color:#fff;" width="16" height="16" viewBox="0 0 16 16" fill="none" stroke="currentColor" stroke-width="1" stroke-linecap="round" stroke-linejoin="round"><circle cx="2" cy="8" r="1.550" fill="currentColor" stroke="none"/><circle cx="8" cy="8" r="1.550" fill="currentColor" stroke="none"/><circle cx="14" cy="8" r="1.550" fill="currentColor" stroke="none"/></svg>
<span style="left:529.00px;top:484.90px;font-size:12.3px;line-height:18px;font-weight:700;color:#e0e0e0;letter-spacing:-0.612px;">Current variant</span>
<svg style="left:769.50px;top:486.80px;color:#e6e6e6;" width="15" height="15" viewBox="0 0 16 16" fill="none" stroke="currentColor" stroke-width="0.95" stroke-linecap="round" stroke-linejoin="round"><path d="M8 15.500V8M4.600 11.200L8 7.800l3.400 3.400"/><path d="M4.500 9.200L.8 6.400 8 1l7.200 5.400-3.700 2.800"/></svg>
<span style="left:530.00px;top:516.80px;font-size:12.3px;line-height:18px;color:#cfcfcf;letter-spacing:-0.152px;">Variant</span>
<div style="left:644px;top:514.3px;width:113.5px;height:23.3px;border:1px solid #474747;border-radius:4px;box-sizing:border-box"></div>
<span style="left:652.00px;top:516.80px;font-size:12.3px;line-height:18px;font-weight:700;color:#fff;letter-spacing:-0.716px;">Primary</span>
<svg style="left:740.95px;top:523.25px;color:#f0f0f0;" width="6.5" height="6.5" viewBox="0 0 16 16" fill="none" stroke="currentColor" stroke-width="2.6" stroke-linecap="round" stroke-linejoin="round"><path d="M3.500 6l4.500 4.500L12.500 6"/></svg>
<span style="left:530.00px;top:548.80px;font-size:12.3px;line-height:18px;color:#cfcfcf;letter-spacing:-0.407px;">Size</span>
<div style="left:644px;top:546.3px;width:113.5px;height:23.3px;border:1px solid #474747;border-radius:4px;box-sizing:border-box"></div>
<span style="left:652.00px;top:548.80px;font-size:12.3px;line-height:18px;font-weight:700;color:#fff;">M</span>
<svg style="left:740.95px;top:555.25px;color:#f0f0f0;" width="6.5" height="6.5" viewBox="0 0 16 16" fill="none" stroke="currentColor" stroke-width="2.6" stroke-linecap="round" stroke-linejoin="round"><path d="M3.500 6l4.500 4.500L12.500 6"/></svg>
<span style="left:530.00px;top:580.80px;font-size:12.3px;line-height:18px;color:#cfcfcf;letter-spacing:-0.144px;">State</span>
<div style="left:644px;top:578.3px;width:113.5px;height:23.3px;border:1px solid #474747;border-radius:4px;box-sizing:border-box"></div>
<span style="left:652.00px;top:580.80px;font-size:12.3px;line-height:18px;font-weight:700;color:#fff;letter-spacing:-0.945px;">Focus</span>
<svg style="left:740.95px;top:587.25px;color:#f0f0f0;" width="6.5" height="6.5" viewBox="0 0 16 16" fill="none" stroke="currentColor" stroke-width="2.6" stroke-linecap="round" stroke-linejoin="round"><path d="M3.500 6l4.500 4.500L12.500 6"/></svg>
<span style="left:530.00px;top:612.80px;font-size:12.3px;line-height:18px;color:#cfcfcf;letter-spacing:-0.265px;">Background</span>
<div style="left:644px;top:610.3px;width:113.5px;height:23.3px;border:1px solid #474747;border-radius:4px;box-sizing:border-box"></div>
<span style="left:652.00px;top:612.80px;font-size:12.3px;line-height:18px;font-weight:700;color:#fff;letter-spacing:-0.611px;">Light</span>
<svg style="left:740.95px;top:619.25px;color:#f0f0f0;" width="6.5" height="6.5" viewBox="0 0 16 16" fill="none" stroke="currentColor" stroke-width="2.6" stroke-linecap="round" stroke-linejoin="round"><path d="M3.500 6l4.500 4.500L12.500 6"/></svg>
</div>
<div style="left:797.5px;top:436px;width:2.5px;height:210px;background:linear-gradient(180deg,#5d5868,#4a4556 40%,#6a5a5a 70%,#4d4850)"></div>
<div id="tb">
<div style="left:503px;top:650.5px;width:348px;height:34.3px;background:#2c2c2c;border-radius:9px;box-shadow:0 2px 6px rgba(0,0,0,.35),0 0 0 .5px rgba(0,0,0,.4)"></div>
<div style="left:509px;top:656px;width:23px;height:23px;background:#0c8ce9;border-radius:4px"></div>
<svg style="left:512.55px;top:659.85px;color:#fff;" width="15.5" height="15.5" viewBox="0 0 16 16" fill="none" stroke="currentColor" stroke-width="1.15" stroke-linecap="round" stroke-linejoin="round"><path d="M2.800 3.600c-.3-.6.300-1.200.9-1l9.800 3.600c.6.200.6 1 .1 1.300l-3.800 1.800-1.800 3.800c-.3.500-1.100.5-1.300-.1z"/></svg>
<svg style="left:535.25px;top:665.25px;color:#fff;" width="5.5" height="5.5" viewBox="0 0 16 16" fill="none" stroke="currentColor" stroke-width="2.9" stroke-linecap="round" stroke-linejoin="round"><path d="M3.500 6l4.500 4.500L12.500 6"/></svg>
<svg style="left:576.25px;top:665.25px;color:#fff;" width="5.5" height="5.5" viewBox="0 0 16 16" fill="none" stroke="currentColor" stroke-width="2.9" stroke-linecap="round" stroke-linejoin="round"><path d="M3.500 6l4.500 4.500L12.500 6"/></svg>
<svg style="left:617.25px;top:665.25px;color:#fff;" width="5.5" height="5.5" viewBox="0 0 16 16" fill="none" stroke="currentColor" stroke-width="2.9" stroke-linecap="round" stroke-linejoin="round"><path d="M3.500 6l4.500 4.500L12.500 6"/></svg>
<svg style="left:658.25px;top:665.25px;color:#fff;" width="5.5" height="5.5" viewBox="0 0 16 16" fill="none" stroke="currentColor" stroke-width="2.9" stroke-linecap="round" stroke-linejoin="round"><path d="M3.500 6l4.500 4.500L12.500 6"/></svg>
<svg style="left:728.25px;top:665.25px;color:#fff;" width="5.5" height="5.5" viewBox="0 0 16 16" fill="none" stroke="currentColor" stroke-width="2.9" stroke-linecap="round" stroke-linejoin="round"><path d="M3.500 6l4.500 4.500L12.500 6"/></svg>
<svg style="left:554.75px;top:660.75px;color:#fff;" width="13.5" height="13.5" viewBox="0 0 16 16" fill="none" stroke="currentColor" stroke-width="1.15" stroke-linecap="round" stroke-linejoin="round"><path d="M5 1.500v13M11 1.500v13M1.500 5h13M1.500 11h13"/></svg>
<svg style="left:595.50px;top:661.00px;color:#fff;" width="13" height="13" viewBox="0 0 16 16" fill="none" stroke="currentColor" stroke-width="1.3" stroke-linecap="round" stroke-linejoin="round"><rect x="2" y="2" width="12" height="12" rx="1.200"/></svg>
<svg style="left:636.75px;top:660.75px;color:#fff;" width="13.5" height="13.5" viewBox="0 0 16 16" fill="none" stroke="currentColor" stroke-width="1.2" stroke-linecap="round" stroke-linejoin="round"><path d="M2 3.200L9.500 1.500l4.800 8.500-4.200 4.500L3.500 11z"/><circle cx="8.300" cy="8.300" r="1.800"/><path d="M2 3.200l5 3.900"/></svg>
<svg style="left:677.50px;top:661.00px;color:#fff;" width="13" height="13" viewBox="0 0 16 16" fill="none" stroke="currentColor" stroke-width="1.3" stroke-linecap="round" stroke-linejoin="round"><path d="M2.500 4.500V2.500h11v2M8 2.500v11M5.500 13.500h5"/></svg>
<svg style="left:707.25px;top:660.75px;color:#fff;" width="13.5" height="13.5" viewBox="0 0 16 16" fill="none" stroke="currentColor" stroke-width="1.25" stroke-linecap="round" stroke-linejoin="round"><path d="M8 1.800a6.200 6.200 0 1 1 0 12.400H1.800V8A6.200 6.200 0 0 1 8 1.800z"/></svg>
<svg style="left:748.50px;top:661.00px;color:#fff;" width="13" height="13" viewBox="0 0 16 16" fill="none" stroke="currentColor" stroke-width="1.25" stroke-linecap="round" stroke-linejoin="round"><circle cx="4.300" cy="4.300" r="2.500"/><circle cx="11.700" cy="4.300" r="2.500"/><circle cx="4.300" cy="11.700" r="2.500"/><path d="M11.700 8.800v5.800M8.800 11.700h5.800"/></svg>
<div style="left:772px;top:651px;width:1px;height:33px;background:#3e3e3e"></div>
<div style="left:779px;top:656px;width:66px;height:23px;background:#3a3a3a;border-radius:4px"></div>
<div style="left:801px;top:657.5px;width:21px;height:20px;background:#2c2c2c;border-radius:3px"></div>
<svg style="left:784.50px;top:662.00px;color:#c9c9c9;" width="11" height="11" viewBox="0 0 16 16" fill="none" stroke="currentColor" stroke-width="1.5" stroke-linecap="round" stroke-linejoin="round"><path d="M1.500 12C4 8 7.500 3.500 9 3.500s-3.500 7-2 8 5-5.500 6.500-5-2 5-.5 5.500 2-.8 2-.8"/></svg>
<svg style="left:806.00px;top:662.00px;color:#6fb6f2;" width="11" height="11" viewBox="0 0 16 16" fill="none" stroke="currentColor" stroke-width="1.5" stroke-linecap="round" stroke-linejoin="round"><path d="M2 13.500V4.200A1.700 1.700 0 0 1 3.700 2.500h8.600A1.700 1.700 0 0 1 14 4.200V6M2 6h12M5.500 6v7.500"/><path d="M8.300 8.800l6 2.200-2.600 1.100-1.100 2.600z"/></svg>
<svg style="left:827.50px;top:662.00px;color:#a5a5a5;" width="11" height="11" viewBox="0 0 16 16" fill="none" stroke="currentColor" stroke-width="1.3" stroke-linecap="round" stroke-linejoin="round"><path d="M5 4.500L1.500 8 5 11.500M11 4.500L14.500 8 11 11.500M9.300 3L6.700 13"/></svg>
</div>
<div id="tk">
<div style="left:873px;top:14.5px;width:678px;height:636px;background:#2c2c2c;border-radius:9px;box-shadow:0 0 0 .5px rgba(0,0,0,.55),0 4px 14px rgba(0,0,0,.42),0 0 4px rgba(0,0,0,.3)"></div>
<svg style="left:887.00px;top:23.00px;color:#fff;" width="12" height="12" viewBox="0 0 16 16" fill="none" stroke="currentColor" stroke-width="1" stroke-linecap="round" stroke-linejoin="round"><rect x="0" y="0" width="16" height="16" rx="3.600" fill="#fff" stroke="none"/><circle cx="8" cy="8" r="3.100" stroke="#222" stroke-width="1.200" fill="none"/><path d="M8 2.800v2.400M8 10.800v2.400M2.800 8h2.400M10.800 8h2.400" stroke="#222" stroke-width="1.200"/></svg>
<span style="left:905.00px;top:23.00px;font-size:8.7px;line-height:13px;font-weight:700;color:#fff;letter-spacing:-0.371px;">Tokens Studio for Figma</span>
<svg style="left:1531.50px;top:24.70px;color:#fff;" width="9" height="9" viewBox="0 0 16 16" fill="none" stroke="currentColor" stroke-width="1.5" stroke-linecap="round" stroke-linejoin="round"><path d="M3 3l10 10M13 3L3 13"/></svg>
<div style="left:873px;top:43px;width:678px;height:1px;background:#3e3e3e"></div>
<span style="left:882.00px;top:54.10px;font-size:8.3px;line-height:13px;font-weight:700;color:#fff;letter-spacing:-0.241px;">Tokens</span>
<span style="left:926.30px;top:54.10px;font-size:8.3px;line-height:13px;color:#8f8f8f;letter-spacing:0.177px;">Inspect</span>
<span style="left:971.80px;top:54.10px;font-size:8.3px;line-height:13px;color:#8f8f8f;letter-spacing:0.126px;">Settings</span>
<svg style="left:1487.75px;top:54.25px;color:#b8b8b8;" width="12.5" height="12.5" viewBox="0 0 16 16" fill="none" stroke="currentColor" stroke-width="1.15" stroke-linecap="round" stroke-linejoin="round"><path d="M4 13.500H3A1.500 1.500 0 0 1 1.500 12V3.500A1.500 1.500 0 0 1 3 2h10a1.500 1.500 0 0 1 1.500 1.500V12a1.500 1.500 0 0 1-1.500 1.500h-1M1.500 5.300h13M7 9.500l-2 2.200 2 2.300M9 9.500l2 2.200L9 14"/></svg>
<svg style="left:1509.95px;top:54.75px;color:#b8b8b8;" width="11.5" height="11.5" viewBox="0 0 16 16" fill="none" stroke="currentColor" stroke-width="1.2" stroke-linecap="round" stroke-linejoin="round"><path d="M1.500 4.500H4c4 0 4 7 8 7h2.500M1.500 11.500H4c1.200 0 2-.6 2.700-1.500M9.300 6C10 5.100 10.800 4.500 12 4.500h2.500M12.500 2.500l2 2-2 2M12.500 9.500l2 2-2 2"/></svg>
<svg style="left:1532.35px;top:55.25px;color:#b8b8b8;" width="10.5" height="10.5" viewBox="0 0 16 16" fill="none" stroke="currentColor" stroke-width="1.2" stroke-linecap="round" stroke-linejoin="round"><path d="M14.500 1.500L10 6M10 2.500V6h3.500M1.500 14.500L6 10M6 13.500V10H2.500"/></svg>
<div style="left:873px;top:78px;width:678px;height:1px;background:#3e3e3e"></div>
<svg style="left:880.75px;top:88.75px;color:#c4c4c4;" width="10.5" height="10.5" viewBox="0 0 16 16" fill="none" stroke="currentColor" stroke-width="1.4" stroke-linecap="round" stroke-linejoin="round"><rect x="2" y="2.500" width="4.500" height="11" rx="1.500"/><path d="M9.500 2.500h2A1.500 1.500 0 0 1 13 4v8a1.500 1.500 0 0 1-1.500 1.500h-2"/></svg>
<svg style="left:902.45px;top:88.95px;color:#e6e6e6;" width="10.5" height="10.5" viewBox="0 0 16 16" fill="none" stroke="currentColor" stroke-width="1.4" stroke-linecap="round" stroke-linejoin="round"><circle cx="7.2" cy="7.2" r="5.2"/><path d="M11 11l3.600 3.600"/></svg>
<span style="left:916.50px;top:88.20px;font-size:8.8px;line-height:13px;color:#7d7d7d;letter-spacing:0.103px;">Search</span>
<span style="left:1423.00px;top:87.40px;font-size:8.3px;line-height:13px;color:#9a9a9a;letter-spacing:-0.106px;">Theme:</span>
<span style="left:1454.00px;top:87.40px;font-size:8.3px;line-height:13px;font-weight:700;color:#fff;letter-spacing:-0.188px;">None</span>
<svg style="left:1477.75px;top:89.25px;color:#fff;" width="9.5" height="9.5" viewBox="0 0 16 16" fill="none" stroke="currentColor" stroke-width="1" stroke-linecap="round" stroke-linejoin="round"><path d="M3.500 5.500h9L8 11z" fill="currentColor" stroke="none"/></svg>
<div style="left:1500.5px;top:84px;width:46px;height:20px;background:#383838;border-radius:4px"></div>
<svg style="left:1508.20px;top:89.50px;color:#c9c9c9;" width="9" height="9" viewBox="0 0 16 16" fill="none" stroke="currentColor" stroke-width="1.3" stroke-linecap="round" stroke-linejoin="round"><path d="M2 4h12M2 8h12M2 12h7.500"/></svg>
<div style="left:1525px;top:84.5px;width:21.5px;height:19.5px;background:#36436a;border:1px solid #2272c8;border-radius:4px;box-sizing:border-box"></div>
<svg style="left:1530.10px;top:88.80px;color:#5aa7ee;" width="11" height="11" viewBox="0 0 16 16" fill="none" stroke="currentColor" stroke-width="1.3" stroke-linecap="round" stroke-linejoin="round"><path d="M5.500 2C4 2 3.800 2.800 3.800 4v2c0 1-.5 2-1.500 2 1 0 1.500 1 1.500 2v2c0 1.200.2 2 1.700 2M10.500 2c1.500 0 1.700.8 1.700 2v2c0 1 .5 2 1.500 2-1 0-1.500 1-1.500 2v2c0 1.200-.2 2-1.700 2"/></svg>
<div style="left:873px;top:108.5px;width:678px;height:1px;background:#3e3e3e"></div>
<div style="left:873px;top:109.3px;width:108.4px;height:23px;background:#3b4363"></div>
<span style="left:884.50px;top:115.00px;font-size:8.3px;line-height:13px;font-weight:700;color:#f4f4f4;letter-spacing:-0.269px;">NWGoldie</span>
<div style="left:960px;top:115.5px;width:11.8px;height:11.8px;border:1px solid #5a5f75;border-radius:2.500px;box-sizing:border-box;background:#353b55"></div>
<div style="left:879px;top:138px;width:96px;height:20px;border:1px solid #414141;border-radius:4px;box-sizing:border-box"></div>
<svg style="left:902.75px;top:142.95px;color:#fff;" width="10.5" height="10.5" viewBox="0 0 16 16" fill="none" stroke="currentColor" stroke-width="1.3" stroke-linecap="round" stroke-linejoin="round"><path d="M8 2v12M2 8h12"/></svg>
<span style="left:917.00px;top:142.10px;font-size:8.3px;line-height:13px;font-weight:700;color:#fff;letter-spacing:-0.113px;">New Set</span>
<div style="left:981.3px;top:109px;width:569.7px;height:477px;background:#1e1e1e;overflow:hidden">
<div class="ln" style="top:0.30px"><span class="m " style="left:0;width:24.0px;text-align:right;color:#c6c6c6">1</span><span class="m" style="left:42.90px"><i style="color:#ffd700">{</i></span></div>
<div class="ln" style="top:12.55px"><div style="left:43.0px;top:0;width:600px;height:12.25px;background:#213043"></div><div style="left:42.70px;top:0;width:1px;height:12.25px;background:#3b3b3b"></div><span class="m n" style="left:0;width:24.0px;text-align:right;color:#858585">2</span><svg style="left:31.2px;top:2.600px" width="7" height="7" viewBox="0 0 16 16" fill="none" stroke="#c5c5c5" stroke-width="1.900" stroke-linecap="round" stroke-linejoin="round"><path d="M5 2l6.500 6L5 14"/></svg><span class="m" style="left:52.36px"><i style="color:#9cdcfe">"Color"</i><i style="color:#d4d4d4">: </i><i style="color:#da70d6">{</i><i style="color:#808080">⋯</i></span></div>
<div class="ln" style="top:24.80px"><div style="left:42.70px;top:0;width:1px;height:12.25px;background:#3b3b3b"></div><span class="m n" style="left:0;width:24.0px;text-align:right;color:#858585">989</span><span class="m" style="left:52.36px"><i style="color:#da70d6">}</i><i style="color:#d4d4d4">,</i></span></div>
<div class="ln" style="top:37.05px"><div style="left:43.0px;top:0;width:600px;height:12.25px;background:#213043"></div><div style="left:42.70px;top:0;width:1px;height:12.25px;background:#3b3b3b"></div><span class="m n" style="left:0;width:24.0px;text-align:right;color:#858585">990</span><svg style="left:31.2px;top:2.600px" width="7" height="7" viewBox="0 0 16 16" fill="none" stroke="#c5c5c5" stroke-width="1.900" stroke-linecap="round" stroke-linejoin="round"><path d="M5 2l6.500 6L5 14"/></svg><span class="m" style="left:52.36px"><i style="color:#9cdcfe">"Typography"</i><i style="color:#d4d4d4">: </i><i style="color:#da70d6">{</i><i style="color:#808080">⋯</i></span></div>
<div class="ln" style="top:49.30px"><div style="left:42.70px;top:0;width:1px;height:12.25px;background:#3b3b3b"></div><span class="m n" style="left:0;width:24.0px;text-align:right;color:#858585">2399</span><span class="m" style="left:52.36px"><i style="color:#da70d6">}</i><i style="color:#d4d4d4">,</i></span></div>
<div class="ln" style="top:61.55px"><div style="left:43.0px;top:0;width:600px;height:12.25px;background:#213043"></div><div style="left:42.70px;top:0;width:1px;height:12.25px;background:#3b3b3b"></div><span class="m n" style="left:0;width:24.0px;text-align:right;color:#858585">2400</span><svg style="left:31.2px;top:2.600px" width="7" height="7" viewBox="0 0 16 16" fill="none" stroke="#c5c5c5" stroke-width="1.900" stroke-linecap="round" stroke-linejoin="round"><path d="M5 2l6.500 6L5 14"/></svg><span class="m" style="left:52.36px"><i style="color:#9cdcfe">"Sizing"</i><i style="color:#d4d4d4">: </i><i style="color:#da70d6">{</i><i style="color:#808080">⋯</i></span></div>
<div class="ln" style="top:73.80px"><div style="left:42.70px;top:0;width:1px;height:12.25px;background:#3b3b3b"></div><span class="m n" style="left:0;width:24.0px;text-align:right;color:#858585">2807</span><span class="m" style="left:52.36px"><i style="color:#da70d6">}</i><i style="color:#d4d4d4">,</i></span></div>
<div class="ln" style="top:86.05px"><div style="left:42.70px;top:0;width:1px;height:12.25px;background:#3b3b3b"></div><span class="m n" style="left:0;width:24.0px;text-align:right;color:#858585">2808</span><span class="m" style="left:52.36px"><i style="color:#9cdcfe">"Spacing"</i><i style="color:#d4d4d4">: </i><i style="color:#da70d6">{</i></span></div>
<div class="ln" style="top:98.30px"><div style="left:43.0px;top:0;width:600px;height:12.25px;background:#213043"></div><div style="left:42.70px;top:0;width:1px;height:12.25px;background:#3b3b3b"></div><div style="left:52.16px;top:0;width:1px;height:12.25px;background:#3b3b3b"></div><span class="m n" style="left:0;width:24.0px;text-align:right;color:#858585">2809</span><svg style="left:31.2px;top:2.600px" width="7" height="7" viewBox="0 0 16 16" fill="none" stroke="#c5c5c5" stroke-width="1.900" stroke-linecap="round" stroke-linejoin="round"><path d="M5 2l6.500 6L5 14"/></svg><span class="m" style="left:61.82px"><i style="color:#9cdcfe">"Primitive"</i><i style="color:#d4d4d4">: </i><i style="color:#179fff">{</i><i style="color:#808080">⋯</i></span></div>
<div class="ln" style="top:110.55px"><div style="left:42.70px;top:0;width:1px;height:12.25px;background:#3b3b3b"></div><div style="left:52.16px;top:0;width:1px;height:12.25px;background:#3b3b3b"></div><span class="m n" style="left:0;width:24.0px;text-align:right;color:#858585">2862</span><span class="m" style="left:61.82px"><i style="color:#179fff">}</i><i style="color:#d4d4d4">,</i></span></div>
<div class="ln" style="top:122.80px"><div style="left:43.0px;top:0;width:600px;height:12.25px;background:#213043"></div><div style="left:42.70px;top:0;width:1px;height:12.25px;background:#3b3b3b"></div><div style="left:52.16px;top:0;width:1px;height:12.25px;background:#3b3b3b"></div><span class="m n" style="left:0;width:24.0px;text-align:right;color:#858585">2863</span><svg style="left:31.2px;top:2.600px" width="7" height="7" viewBox="0 0 16 16" fill="none" stroke="#c5c5c5" stroke-width="1.900" stroke-linecap="round" stroke-linejoin="round"><path d="M5 2l6.500 6L5 14"/></svg><span class="m" style="left:61.82px"><i style="color:#9cdcfe">"Semantic"</i><i style="color:#d4d4d4">: </i><i style="color:#179fff">{</i><i style="color:#808080">⋯</i></span></div>
<div class="ln" style="top:135.05px"><div style="left:42.70px;top:0;width:1px;height:12.25px;background:#3b3b3b"></div><div style="left:52.16px;top:0;width:1px;height:12.25px;background:#3b3b3b"></div><span class="m n" style="left:0;width:24.0px;text-align:right;color:#858585">2916</span><span class="m" style="left:61.82px"><i style="color:#179fff">}</i><i style="color:#d4d4d4">,</i></span></div>
<div class="ln" style="top:147.30px"><div style="left:42.70px;top:0;width:1px;height:12.25px;background:#3b3b3b"></div><div style="left:52.16px;top:0;width:1px;height:12.25px;background:#3b3b3b"></div><span class="m n" style="left:0;width:24.0px;text-align:right;color:#858585">2917</span><span class="m" style="left:61.82px"><i style="color:#9cdcfe">"Component"</i><i style="color:#d4d4d4">: </i><i style="color:#179fff">{</i></span></div>
<div class="ln" style="top:159.55px"><div style="left:43.0px;top:0;width:600px;height:12.25px;background:#213043"></div><div style="left:42.70px;top:0;width:1px;height:12.25px;background:#3b3b3b"></div><div style="left:52.16px;top:0;width:1px;height:12.25px;background:#3b3b3b"></div><div style="left:61.62px;top:0;width:1px;height:12.25px;background:#3b3b3b"></div><span class="m n" style="left:0;width:24.0px;text-align:right;color:#858585">2918</span><svg style="left:31.2px;top:2.600px" width="7" height="7" viewBox="0 0 16 16" fill="none" stroke="#c5c5c5" stroke-width="1.900" stroke-linecap="round" stroke-linejoin="round"><path d="M5 2l6.500 6L5 14"/></svg><span class="m" style="left:71.28px"><i style="color:#9cdcfe">"Actions"</i><i style="color:#d4d4d4">: </i><i style="color:#ffd700">{</i><i style="color:#808080">⋯</i></span></div>
<div class="ln" style="top:171.80px"><div style="left:42.70px;top:0;width:1px;height:12.25px;background:#3b3b3b"></div><div style="left:52.16px;top:0;width:1px;height:12.25px;background:#3b3b3b"></div><div style="left:61.62px;top:0;width:1px;height:12.25px;background:#3b3b3b"></div><span class="m n" style="left:0;width:24.0px;text-align:right;color:#858585">2923</span><span class="m" style="left:71.28px"><i style="color:#ffd700">}</i><i style="color:#d4d4d4">,</i></span></div>
<div class="ln" style="top:184.05px"><div style="left:43.0px;top:0;width:600px;height:12.25px;background:#213043"></div><div style="left:42.70px;top:0;width:1px;height:12.25px;background:#3b3b3b"></div><div style="left:52.16px;top:0;width:1px;height:12.25px;background:#3b3b3b"></div><div style="left:61.62px;top:0;width:1px;height:12.25px;background:#3b3b3b"></div><span class="m n" style="left:0;width:24.0px;text-align:right;color:#858585">2924</span><svg style="left:31.2px;top:2.600px" width="7" height="7" viewBox="0 0 16 16" fill="none" stroke="#c5c5c5" stroke-width="1.900" stroke-linecap="round" stroke-linejoin="round"><path d="M5 2l6.500 6L5 14"/></svg><span class="m" style="left:71.28px"><i style="color:#9cdcfe">"Alert"</i><i style="color:#d4d4d4">: </i><i style="color:#ffd700">{</i><i style="color:#808080">⋯</i></span></div>
<div class="ln" style="top:196.30px"><div style="left:42.70px;top:0;width:1px;height:12.25px;background:#3b3b3b"></div><div style="left:52.16px;top:0;width:1px;height:12.25px;background:#3b3b3b"></div><div style="left:61.62px;top:0;width:1px;height:12.25px;background:#3b3b3b"></div><span class="m n" style="left:0;width:24.0px;text-align:right;color:#858585">2939</span><span class="m" style="left:71.28px"><i style="color:#ffd700">}</i><i style="color:#d4d4d4">,</i></span></div>
<div class="ln" style="top:208.55px"><div style="left:43.0px;top:0;width:600px;height:12.25px;background:#213043"></div><div style="left:42.70px;top:0;width:1px;height:12.25px;background:#3b3b3b"></div><div style="left:52.16px;top:0;width:1px;height:12.25px;background:#3b3b3b"></div><div style="left:61.62px;top:0;width:1px;height:12.25px;background:#3b3b3b"></div><span class="m n" style="left:0;width:24.0px;text-align:right;color:#858585">2940</span><svg style="left:31.2px;top:2.600px" width="7" height="7" viewBox="0 0 16 16" fill="none" stroke="#c5c5c5" stroke-width="1.900" stroke-linecap="round" stroke-linejoin="round"><path d="M5 2l6.500 6L5 14"/></svg><span class="m" style="left:71.28px"><i style="color:#9cdcfe">"Back"</i><i style="color:#d4d4d4">: </i><i style="color:#ffd700">{</i><i style="color:#808080">⋯</i></span></div>
<div class="ln" style="top:220.80px"><div style="left:42.70px;top:0;width:1px;height:12.25px;background:#3b3b3b"></div><div style="left:52.16px;top:0;width:1px;height:12.25px;background:#3b3b3b"></div><div style="left:61.62px;top:0;width:1px;height:12.25px;background:#3b3b3b"></div><span class="m n" style="left:0;width:24.0px;text-align:right;color:#858585">2945</span><span class="m" style="left:71.28px"><i style="color:#ffd700">}</i><i style="color:#d4d4d4">,</i></span></div>
<div class="ln" style="top:233.05px"><div style="left:43.0px;top:0;width:600px;height:12.25px;background:#213043"></div><div style="left:42.70px;top:0;width:1px;height:12.25px;background:#3b3b3b"></div><div style="left:52.16px;top:0;width:1px;height:12.25px;background:#3b3b3b"></div><div style="left:61.62px;top:0;width:1px;height:12.25px;background:#3b3b3b"></div><span class="m n" style="left:0;width:24.0px;text-align:right;color:#858585">2946</span><svg style="left:31.2px;top:2.600px" width="7" height="7" viewBox="0 0 16 16" fill="none" stroke="#c5c5c5" stroke-width="1.900" stroke-linecap="round" stroke-linejoin="round"><path d="M5 2l6.500 6L5 14"/></svg><span class="m" style="left:71.28px"><i style="color:#9cdcfe">"Bottom Menu"</i><i style="color:#d4d4d4">: </i><i style="color:#ffd700">{</i><i style="color:#808080">⋯</i></span></div>
<div class="ln" style="top:245.30px"><div style="left:42.70px;top:0;width:1px;height:12.25px;background:#3b3b3b"></div><div style="left:52.16px;top:0;width:1px;height:12.25px;background:#3b3b3b"></div><div style="left:61.62px;top:0;width:1px;height:12.25px;background:#3b3b3b"></div><span class="m n" style="left:0;width:24.0px;text-align:right;color:#858585">2963</span><span class="m" style="left:71.28px"><i style="color:#ffd700">}</i><i style="color:#d4d4d4">,</i></span></div>
<div class="ln" style="top:257.55px"><div style="left:42.70px;top:0;width:1px;height:12.25px;background:#3b3b3b"></div><div style="left:52.16px;top:0;width:1px;height:12.25px;background:#3b3b3b"></div><div style="left:61.62px;top:0;width:1px;height:12.25px;background:#3b3b3b"></div><span class="m n" style="left:0;width:24.0px;text-align:right;color:#858585">2964</span><span class="m" style="left:71.28px"><i style="color:#9cdcfe">"Button"</i><i style="color:#d4d4d4">: </i><i style="color:#ffd700">{</i></span></div>
<div class="ln" style="top:269.80px"><div style="left:42.70px;top:0;width:1px;height:12.25px;background:#3b3b3b"></div><div style="left:52.16px;top:0;width:1px;height:12.25px;background:#3b3b3b"></div><div style="left:61.62px;top:0;width:1px;height:12.25px;background:#3b3b3b"></div><div style="left:71.08px;top:0;width:1px;height:12.25px;background:#3b3b3b"></div><span class="m n" style="left:0;width:24.0px;text-align:right;color:#858585">2965</span><span class="m" style="left:80.74px"><i style="color:#9cdcfe">"S"</i><i style="color:#d4d4d4">: </i><i style="color:#da70d6">{</i></span></div>
<div class="ln" style="top:282.05px"><div style="left:42.70px;top:0;width:1px;height:12.25px;background:#3b3b3b"></div><div style="left:52.16px;top:0;width:1px;height:12.25px;background:#3b3b3b"></div><div style="left:61.62px;top:0;width:1px;height:12.25px;background:#3b3b3b"></div><div style="left:71.08px;top:0;width:1px;height:12.25px;background:#3b3b3b"></div><div style="left:80.54px;top:0;width:1px;height:12.25px;background:#3b3b3b"></div><span class="m n" style="left:0;width:24.0px;text-align:right;color:#858585">2966</span><span class="m" style="left:90.20px"><i style="color:#9cdcfe">"Vertical"</i><i style="color:#d4d4d4">: </i><i style="color:#179fff">{</i></span></div>
<div class="ln" style="top:294.30px"><div style="left:42.70px;top:0;width:1px;height:12.25px;background:#3b3b3b"></div><div style="left:52.16px;top:0;width:1px;height:12.25px;background:#3b3b3b"></div><div style="left:61.62px;top:0;width:1px;height:12.25px;background:#3b3b3b"></div><div style="left:71.08px;top:0;width:1px;height:12.25px;background:#3b3b3b"></div><div style="left:80.54px;top:0;width:1px;height:12.25px;background:#3b3b3b"></div><div style="left:90.00px;top:0;width:1px;height:12.25px;background:#3b3b3b"></div><span class="m n" style="left:0;width:24.0px;text-align:right;color:#858585">2967</span><span class="m" style="left:99.66px"><i style="color:#9cdcfe">"value"</i><i style="color:#d4d4d4">: </i><i style="color:#ce9178">"{Spacing.Semantic.2x}"</i><i style="color:#d4d4d4">,</i></span></div>
<div class="ln" style="top:306.55px"><div style="left:42.70px;top:0;width:1px;height:12.25px;background:#3b3b3b"></div><div style="left:52.16px;top:0;width:1px;height:12.25px;background:#3b3b3b"></div><div style="left:61.62px;top:0;width:1px;height:12.25px;background:#3b3b3b"></div><div style="left:71.08px;top:0;width:1px;height:12.25px;background:#3b3b3b"></div><div style="left:80.54px;top:0;width:1px;height:12.25px;background:#3b3b3b"></div><div style="left:90.00px;top:0;width:1px;height:12.25px;background:#3b3b3b"></div><span class="m n" style="left:0;width:24.0px;text-align:right;color:#858585">2968</span><span class="m" style="left:99.66px"><i style="color:#9cdcfe">"type"</i><i style="color:#d4d4d4">: </i><i style="color:#ce9178">"spacing"</i></span></div>
<div class="ln" style="top:318.80px"><div style="left:42.70px;top:0;width:1px;height:12.25px;background:#3b3b3b"></div><div style="left:52.16px;top:0;width:1px;height:12.25px;background:#3b3b3b"></div><div style="left:61.62px;top:0;width:1px;height:12.25px;background:#3b3b3b"></div><div style="left:71.08px;top:0;width:1px;height:12.25px;background:#3b3b3b"></div><div style="left:80.54px;top:0;width:1px;height:12.25px;background:#3b3b3b"></div><span class="m n" style="left:0;width:24.0px;text-align:right;color:#858585">2969</span><span class="m" style="left:90.20px"><i style="color:#179fff">}</i><i style="color:#d4d4d4">,</i></span></div>
<div class="ln" style="top:331.05px"><div style="left:42.70px;top:0;width:1px;height:12.25px;background:#3b3b3b"></div><div style="left:52.16px;top:0;width:1px;height:12.25px;background:#3b3b3b"></div><div style="left:61.62px;top:0;width:1px;height:12.25px;background:#3b3b3b"></div><div style="left:71.08px;top:0;width:1px;height:12.25px;background:#3b3b3b"></div><div style="left:80.54px;top:0;width:1px;height:12.25px;background:#3b3b3b"></div><span class="m n" style="left:0;width:24.0px;text-align:right;color:#858585">2970</span><span class="m" style="left:90.20px"><i style="color:#9cdcfe">"Horizontal"</i><i style="color:#d4d4d4">: </i><i style="color:#179fff">{</i></span></div>
<div class="ln" style="top:343.30px"><div style="left:42.70px;top:0;width:1px;height:12.25px;background:#3b3b3b"></div><div style="left:52.16px;top:0;width:1px;height:12.25px;background:#3b3b3b"></div><div style="left:61.62px;top:0;width:1px;height:12.25px;background:#3b3b3b"></div><div style="left:71.08px;top:0;width:1px;height:12.25px;background:#3b3b3b"></div><div style="left:80.54px;top:0;width:1px;height:12.25px;background:#3b3b3b"></div><div style="left:90.00px;top:0;width:1px;height:12.25px;background:#3b3b3b"></div><span class="m n" style="left:0;width:24.0px;text-align:right;color:#858585">2971</span><span class="m" style="left:99.66px"><i style="color:#9cdcfe">"value"</i><i style="color:#d4d4d4">: </i><i style="color:#ce9178">"{Spacing.Semantic.3x}"</i><i style="color:#d4d4d4">,</i></span></div>
<div class="ln" style="top:355.55px"><div style="left:42.70px;top:0;width:1px;height:12.25px;background:#3b3b3b"></div><div style="left:52.16px;top:0;width:1px;height:12.25px;background:#3b3b3b"></div><div style="left:61.62px;top:0;width:1px;height:12.25px;background:#3b3b3b"></div><div style="left:71.08px;top:0;width:1px;height:12.25px;background:#3b3b3b"></div><div style="left:80.54px;top:0;width:1px;height:12.25px;background:#3b3b3b"></div><div style="left:90.00px;top:0;width:1px;height:12.25px;background:#3b3b3b"></div><span class="m n" style="left:0;width:24.0px;text-align:right;color:#858585">2972</span><span class="m" style="left:99.66px"><i style="color:#9cdcfe">"type"</i><i style="color:#d4d4d4">: </i><i style="color:#ce9178">"spacing"</i></span></div>
<div class="ln" style="top:367.80px"><div style="left:42.70px;top:0;width:1px;height:12.25px;background:#3b3b3b"></div><div style="left:52.16px;top:0;width:1px;height:12.25px;background:#3b3b3b"></div><div style="left:61.62px;top:0;width:1px;height:12.25px;background:#3b3b3b"></div><div style="left:71.08px;top:0;width:1px;height:12.25px;background:#3b3b3b"></div><div style="left:80.54px;top:0;width:1px;height:12.25px;background:#3b3b3b"></div><span class="m n" style="left:0;width:24.0px;text-align:right;color:#858585">2973</span><span class="m" style="left:90.20px"><i style="color:#179fff">}</i><i style="color:#d4d4d4">,</i></span></div>
<div class="ln" style="top:380.05px"><div style="left:42.70px;top:0;width:1px;height:12.25px;background:#3b3b3b"></div><div style="left:52.16px;top:0;width:1px;height:12.25px;background:#3b3b3b"></div><div style="left:61.62px;top:0;width:1px;height:12.25px;background:#3b3b3b"></div><div style="left:71.08px;top:0;width:1px;height:12.25px;background:#3b3b3b"></div><div style="left:80.54px;top:0;width:1px;height:12.25px;background:#3b3b3b"></div><span class="m n" style="left:0;width:24.0px;text-align:right;color:#858585">2974</span><span class="m" style="left:90.20px"><i style="color:#9cdcfe">"Gap"</i><i style="color:#d4d4d4">: </i><i style="color:#179fff">{</i></span></div>
<div class="ln" style="top:392.30px"><div style="left:42.70px;top:0;width:1px;height:12.25px;background:#3b3b3b"></div><div style="left:52.16px;top:0;width:1px;height:12.25px;background:#3b3b3b"></div><div style="left:61.62px;top:0;width:1px;height:12.25px;background:#3b3b3b"></div><div style="left:71.08px;top:0;width:1px;height:12.25px;background:#3b3b3b"></div><div style="left:80.54px;top:0;width:1px;height:12.25px;background:#3b3b3b"></div><div style="left:90.00px;top:0;width:1px;height:12.25px;background:#3b3b3b"></div><span class="m n" style="left:0;width:24.0px;text-align:right;color:#858585">2975</span><span class="m" style="left:99.66px"><i style="color:#9cdcfe">"value"</i><i style="color:#d4d4d4">: </i><i style="color:#ce9178">"{Spacing.Semantic.x}"</i><i style="color:#d4d4d4">,</i></span></div>
<div class="ln" style="top:404.55px"><div style="left:42.70px;top:0;width:1px;height:12.25px;background:#3b3b3b"></div><div style="left:52.16px;top:0;width:1px;height:12.25px;background:#3b3b3b"></div><div style="left:61.62px;top:0;width:1px;height:12.25px;background:#3b3b3b"></div><div style="left:71.08px;top:0;width:1px;height:12.25px;background:#3b3b3b"></div><div style="left:80.54px;top:0;width:1px;height:12.25px;background:#3b3b3b"></div><div style="left:90.00px;top:0;width:1px;height:12.25px;background:#3b3b3b"></div><span class="m n" style="left:0;width:24.0px;text-align:right;color:#858585">2976</span><span class="m" style="left:99.66px"><i style="color:#9cdcfe">"type"</i><i style="color:#d4d4d4">: </i><i style="color:#ce9178">"spacing"</i></span></div>
<div class="ln" style="top:416.80px"><div style="left:42.70px;top:0;width:1px;height:12.25px;background:#3b3b3b"></div><div style="left:52.16px;top:0;width:1px;height:12.25px;background:#3b3b3b"></div><div style="left:61.62px;top:0;width:1px;height:12.25px;background:#3b3b3b"></div><div style="left:71.08px;top:0;width:1px;height:12.25px;background:#3b3b3b"></div><div style="left:80.54px;top:0;width:1px;height:12.25px;background:#3b3b3b"></div><span class="m n" style="left:0;width:24.0px;text-align:right;color:#858585">2977</span><span class="m" style="left:90.20px"><i style="color:#179fff">}</i></span></div>
<div class="ln" style="top:429.05px"><div style="left:42.70px;top:0;width:1px;height:12.25px;background:#3b3b3b"></div><div style="left:52.16px;top:0;width:1px;height:12.25px;background:#3b3b3b"></div><div style="left:61.62px;top:0;width:1px;height:12.25px;background:#3b3b3b"></div><div style="left:71.08px;top:0;width:1px;height:12.25px;background:#3b3b3b"></div><span class="m n" style="left:0;width:24.0px;text-align:right;color:#858585">2978</span><span class="m" style="left:80.74px"><i style="color:#da70d6">}</i><i style="color:#d4d4d4">,</i></span></div>
<div class="ln" style="top:441.30px"><div style="left:42.70px;top:0;width:1px;height:12.25px;background:#3b3b3b"></div><div style="left:52.16px;top:0;width:1px;height:12.25px;background:#3b3b3b"></div><div style="left:61.62px;top:0;width:1px;height:12.25px;background:#3b3b3b"></div><div style="left:71.08px;top:0;width:1px;height:12.25px;background:#3b3b3b"></div><span class="m n" style="left:0;width:24.0px;text-align:right;color:#858585">2979</span><span class="m" style="left:80.74px"><i style="color:#9cdcfe">"M"</i><i style="color:#d4d4d4">: </i><i style="color:#da70d6">{</i></span></div>
<div class="ln" style="top:453.55px"><div style="left:42.70px;top:0;width:1px;height:12.25px;background:#3b3b3b"></div><div style="left:52.16px;top:0;width:1px;height:12.25px;background:#3b3b3b"></div><div style="left:61.62px;top:0;width:1px;height:12.25px;background:#3b3b3b"></div><div style="left:71.08px;top:0;width:1px;height:12.25px;background:#3b3b3b"></div><div style="left:80.54px;top:0;width:1px;height:12.25px;background:#3b3b3b"></div><span class="m n" style="left:0;width:24.0px;text-align:right;color:#858585">2980</span><span class="m" style="left:90.20px"><i style="color:#9cdcfe">"Vertical"</i><i style="color:#d4d4d4">: </i><i style="color:#179fff">{</i></span></div>
<div class="ln" style="top:465.80px"><div style="left:42.70px;top:0;width:1px;height:12.25px;background:#3b3b3b"></div><div style="left:52.16px;top:0;width:1px;height:12.25px;background:#3b3b3b"></div><div style="left:61.62px;top:0;width:1px;height:12.25px;background:#3b3b3b"></div><div style="left:71.08px;top:0;width:1px;height:12.25px;background:#3b3b3b"></div><div style="left:80.54px;top:0;width:1px;height:12.25px;background:#3b3b3b"></div><div style="left:90.00px;top:0;width:1px;height:12.25px;background:#3b3b3b"></div><span class="m n" style="left:0;width:24.0px;text-align:right;color:#858585">2981</span><span class="m" style="left:99.66px"><i style="color:#9cdcfe">"value"</i><i style="color:#d4d4d4">: </i><i style="color:#ce9178">"{Spacing.Semantic.3x}"</i><i style="color:#d4d4d4">,</i></span></div>
<div style="left:42.5px;top:10.500px;width:5px;height:1.200px;background:#c9a700"></div>
<div style="left:559.7px;top:0px;width:1px;height:477px;background:#3a3a3a"></div>
<div style="left:564.2px;top:0.5px;width:5px;height:4.5px;background:#e5c100"></div>
</div>
<div style="left:873px;top:586px;width:678px;height:1px;background:#3e3e3e"></div>
<div style="left:879.5px;top:593px;width:19.3px;height:19.7px;border:1px solid #474747;border-radius:4px;box-sizing:border-box"></div>
<div style="left:900.8px;top:593px;width:19.3px;height:19.7px;border:1px solid #474747;border-radius:4px;box-sizing:border-box"></div>
<div style="left:922.5px;top:593px;width:96.5px;height:19.7px;border:1px solid #474747;border-radius:4px;box-sizing:border-box"></div>
<svg style="left:883.75px;top:597.75px;color:#c9c9c9;" width="10.5" height="10.5" viewBox="0 0 16 16" fill="none" stroke="currentColor" stroke-width="1.2" stroke-linecap="round" stroke-linejoin="round"><path d="M3 14V3.500L5.500 1.500h6v12.500zM5.500 1.500V14M11.500 3.500l1.500 1V14H3"/><path d="M7.500 4h2M7.500 6.500h2M7.500 9h2"/></svg>
<svg style="left:905.05px;top:597.75px;color:#fff;" width="10.5" height="10.5" viewBox="0 0 16 16" fill="none" stroke="currentColor" stroke-width="2" stroke-linecap="round" stroke-linejoin="round"><path d="M4.500 1.500v5M2 4h5M10.500 6.500v7.500M6.800 10.200h7.500"/></svg>
<span style="left:931.80px;top:596.80px;font-size:8.3px;line-height:13px;font-weight:700;color:#fff;letter-spacing:-0.206px;">Styles &amp; Variables</span>
<svg style="left:1003.55px;top:599.25px;color:#fff;" width="8.5" height="8.5" viewBox="0 0 16 16" fill="none" stroke="currentColor" stroke-width="1" stroke-linecap="round" stroke-linejoin="round"><path d="M3.500 5.500h9L8 11z" fill="currentColor" stroke="none"/></svg>
<div style="left:1410.5px;top:592.6px;width:111.3px;height:20px;background:#0c8ce9;border-radius:5px"></div>
<div style="left:1501.3px;top:592.6px;width:1px;height:20px;background:#3aa3f0"></div>
<span style="left:1420.00px;top:596.60px;font-size:8.3px;line-height:13px;font-weight:700;color:#fff;letter-spacing:-0.186px;">Apply to document</span>
<svg style="left:1507.95px;top:599.45px;color:#fff;" width="7.5" height="7.5" viewBox="0 0 16 16" fill="none" stroke="currentColor" stroke-width="1" stroke-linecap="round" stroke-linejoin="round"><path d="M3.500 5.500h9L8 11z" fill="currentColor" stroke="none"/></svg>
<svg style="left:1529.30px;top:597.30px;color:#c9c9c9;" width="11" height="11" viewBox="0 0 16 16" fill="none" stroke="currentColor" stroke-width="1.2" stroke-linecap="round" stroke-linejoin="round"><circle cx="8" cy="8" r="2.300"/><path d="M8 1.500l1.300 1.700 2.100-.5.600 2.100 2 .8-.8 2 .8 2-2 .8-.6 2.100-2.100-.5L8 14.500l-1.300-1.700-2.100.5-.6-2.100-2-.8.800-2-.8-2 2-.8.600-2.100 2.100.5z"/></svg>
<div style="left:873px;top:618.5px;width:678px;height:1px;background:#3e3e3e"></div>
<svg style="left:885.05px;top:629.25px;color:#fff;" width="11.5" height="11.5" viewBox="0 0 16 16" fill="none" stroke="currentColor" stroke-width="1.8" stroke-linecap="round" stroke-linejoin="round"><circle cx="4.200" cy="3" r="1.700"/><circle cx="4.200" cy="13" r="1.700"/><circle cx="11.800" cy="3.500" r="1.700"/><path d="M4.200 4.700v6.600M11.800 5.200c0 3.500-7.600 2.300-7.600 6"/></svg>
<span style="left:900.00px;top:628.80px;font-size:8.3px;line-height:13px;font-weight:700;color:#fff;letter-spacing:-0.195px;">develop</span>
<svg style="left:945.00px;top:628.00px;color:#c9c9c9;" width="14" height="14" viewBox="0 0 16 16" fill="none" stroke="currentColor" stroke-width="1.15" stroke-linecap="round" stroke-linejoin="round"><path d="M8 1.800l5.500 2.700v6.500L8 14.200l-5.500-3.200V4.500zM2.500 4.500L8 7.500l5.500-3M8 7.500v6.700M1.500 13L14.500 3"/></svg>
<svg style="left:969.25px;top:628.75px;color:#d0d0d0;" width="12.5" height="12.5" viewBox="0 0 16 16" fill="none" stroke="currentColor" stroke-width="1.45" stroke-linecap="round" stroke-linejoin="round"><path d="M8 2v8M4.800 7L8 10.200 11.200 7M2 10.500v2A1.500 1.500 0 0 0 3.500 14h9a1.500 1.500 0 0 0 1.500-1.500v-2"/></svg>
<svg style="left:992.25px;top:628.75px;color:#7d7d7d;" width="12.5" height="12.5" viewBox="0 0 16 16" fill="none" stroke="currentColor" stroke-width="1.45" stroke-linecap="round" stroke-linejoin="round"><path d="M8 10V2M4.800 5.200L8 2l3.200 3.200M2 10.500v2A1.500 1.500 0 0 0 3.500 14h9a1.500 1.500 0 0 0 1.500-1.500v-2"/></svg>
<span style="left:1441.60px;top:629.20px;font-size:8.3px;line-height:13px;color:#a9a9a9;letter-spacing:-0.288px;">V 2.11.0</span>
<div style="left:1477.6px;top:625px;width:24px;height:20px;background:#3e2b62;border-radius:4px"></div>
<span style="left:1481.60px;top:629.50px;font-size:7.8px;line-height:12px;font-weight:700;color:#c8a6f3;letter-spacing:-0.301px;">PRO</span>
<svg style="left:1507.50px;top:629.50px;color:#c9c9c9;" width="11" height="11" viewBox="0 0 16 16" fill="none" stroke="currentColor" stroke-width="1.3" stroke-linecap="round" stroke-linejoin="round"><path d="M3 12.500V3a1.500 1.500 0 0 1 1.500-1.500H13v9.500H4.500A1.500 1.500 0 0 0 3 12.500 1.500 1.500 0 0 0 4.500 14H6M10 14h3M6 11v4.500l2-1.300 2 1.300V11"/></svg>
<svg style="left:1529.30px;top:629.80px;color:#c9c9c9;" width="11" height="11" viewBox="0 0 16 16" fill="none" stroke="currentColor" stroke-width="1.3" stroke-linecap="round" stroke-linejoin="round"><path d="M2 2.500h12v8.500H7L4 13.800V11H2z"/></svg>
<svg style="left:1541px;top:641px" width="9" height="9" viewBox="0 0 9 9" stroke="#5a5a5a" stroke-width="1"><path d="M1 8.500L8.500 1M4.500 8.500l4-4"/></svg>
</div>
<div id="al">
<div style="left:1315px;top:138.5px;width:204px;height:385px;background:#2c2c2c;box-shadow:0 -1px 0 #383838"></div>
<span style="left:1325.60px;top:148.00px;font-size:8.3px;line-height:13px;font-weight:700;color:#fff;letter-spacing:-0.195px;">Auto layout</span>
<div style="left:1497px;top:145px;width:17.7px;height:17.7px;background:#4b5c8c;border-radius:4px"></div>
<svg style="left:1500.05px;top:148.05px;color:#7fc1ff;" width="11.5" height="11.5" viewBox="0 0 16 16" fill="none" stroke="currentColor" stroke-width="1.3" stroke-linecap="round" stroke-linejoin="round"><rect x="2.500" y="2.500" width="4.500" height="11" rx="2.200"/><circle cx="11.500" cy="4.500" r="2"/><path d="M9.500 11.500l1.500 1.500 3-3.500"/></svg>
<div style="left:1325px;top:171.5px;width:166.7px;height:17.5px;background:#383838;border-radius:4px"></div>
<div style="left:1409px;top:172px;width:40.5px;height:16.5px;background:#2c2c2c;border:1px solid #444;border-radius:4px;box-sizing:border-box"></div>
<svg style="left:1340.00px;top:174.20px;color:#e8e8e8;" width="12" height="12" viewBox="0 0 16 16" fill="none" stroke="currentColor" stroke-width="1.1" stroke-linecap="round" stroke-linejoin="round"><circle cx="4" cy="3.800" r="2.200"/><circle cx="11.500" cy="6.500" r="2.200"/><circle cx="6" cy="12" r="2.200"/></svg>
<svg style="left:1381.50px;top:174.20px;color:#e8e8e8;" width="12" height="12" viewBox="0 0 16 16" fill="none" stroke="currentColor" stroke-width="1.1" stroke-linecap="round" stroke-linejoin="round"><circle cx="4.500" cy="3.800" r="2.300"/><circle cx="4.500" cy="11.500" r="2.300"/><path d="M12 2v11.500M9.800 11.300L12 13.500l2.200-2.200"/></svg>
<svg style="left:1423.00px;top:174.20px;color:#e8e8e8;" width="12" height="12" viewBox="0 0 16 16" fill="none" stroke="currentColor" stroke-width="1.1" stroke-linecap="round" stroke-linejoin="round"><circle cx="4" cy="4" r="2.300"/><circle cx="11.500" cy="4" r="2.300"/><path d="M1.500 12h12M11.300 9.800L13.500 12l-2.200 2.200"/></svg>
<svg style="left:1464.50px;top:174.20px;color:#e8e8e8;" width="12" height="12" viewBox="0 0 16 16" fill="none" stroke="currentColor" stroke-width="1.1" stroke-linecap="round" stroke-linejoin="round"><circle cx="4.300" cy="4.300" r="2.300"/><circle cx="11.700" cy="4.300" r="2.300"/><circle cx="4.300" cy="11.700" r="2.300"/><circle cx="11.700" cy="11.700" r="2.300"/></svg>
<svg style="left:1501.00px;top:175.20px;color:#fff;" width="10" height="10" viewBox="0 0 16 16" fill="none" stroke="currentColor" stroke-width="1.4" stroke-linecap="round" stroke-linejoin="round"><path d="M13 3.500c1.500 0 2 1.300 2 2.800S14.300 9.500 13 9.500H3M6.500 6L3 9.500 6.500 13"/></svg>
<div style="left:1325px;top:194.5px;width:81px;height:17.5px;background:#383838;border-radius:4px"></div>
<div style="left:1412px;top:194.5px;width:79.7px;height:17.5px;background:#383838;border-radius:4px"></div>
<span style="left:1330.50px;top:197.20px;font-size:8.3px;line-height:13px;color:#9d9d9d;">W</span>
<span style="left:1342.60px;top:197.20px;font-size:8.3px;line-height:13px;color:#d6d6d6;letter-spacing:0.050px;">185</span>
<span style="left:1383.20px;top:197.20px;font-size:8.3px;line-height:13px;font-weight:700;color:#fff;letter-spacing:-0.111px;">Hug</span>
<span style="left:1417.30px;top:197.20px;font-size:8.3px;line-height:13px;color:#9d9d9d;">H</span>
<span style="left:1428.60px;top:197.20px;font-size:8.3px;line-height:13px;color:#d6d6d6;letter-spacing:0.534px;">38</span>
<span style="left:1469.50px;top:197.20px;font-size:8.3px;line-height:13px;font-weight:700;color:#fff;letter-spacing:-0.111px;">Hug</span>
<svg style="left:1500.50px;top:197.80px;color:#fff;" width="11" height="11" viewBox="0 0 16 16" fill="none" stroke="currentColor" stroke-width="1.4" stroke-linecap="round" stroke-linejoin="round"><rect x="1.500" y="1.500" width="13" height="13" rx="2.200"/><path d="M5 8.500V11h2.500M11 7.500V5H8.500" /></svg>
<div style="left:1325px;top:218px;width:81px;height:40.5px;background:#383838;border-radius:4px"></div>
<div style="left:1338.4px;top:226.4px;width:1.3px;height:1.3px;background:#9a9a9a;border-radius:50%"></div>
<div style="left:1338.4px;top:237.4px;width:1.3px;height:1.3px;background:#9a9a9a;border-radius:50%"></div>
<div style="left:1338.4px;top:248.4px;width:1.3px;height:1.3px;background:#9a9a9a;border-radius:50%"></div>
<div style="left:1364.6000000000001px;top:226.4px;width:1.3px;height:1.3px;background:#9a9a9a;border-radius:50%"></div>
<div style="left:1364.6000000000001px;top:248.4px;width:1.3px;height:1.3px;background:#9a9a9a;border-radius:50%"></div>
<div style="left:1390.8000000000002px;top:226.4px;width:1.3px;height:1.3px;background:#9a9a9a;border-radius:50%"></div>
<div style="left:1390.8000000000002px;top:237.4px;width:1.3px;height:1.3px;background:#9a9a9a;border-radius:50%"></div>
<div style="left:1390.8000000000002px;top:248.4px;width:1.3px;height:1.3px;background:#9a9a9a;border-radius:50%"></div>
<div style="left:1361.5px;top:235.8px;width:1.2px;height:4.5px;background:#5bb6ff"></div>
<div style="left:1364.5px;top:234.6px;width:1.3px;height:7px;background:#5bb6ff"></div>
<div style="left:1367.7px;top:235.8px;width:1.2px;height:4.5px;background:#5bb6ff"></div>
<div style="left:1412px;top:218px;width:79.7px;height:17.3px;background:#383838;border-radius:4px"></div>
<svg style="left:1415.95px;top:222.95px;color:#b5b5b5;" width="7.5" height="7.5" viewBox="0 0 16 16" fill="none" stroke="currentColor" stroke-width="1.5" stroke-linecap="round" stroke-linejoin="round"><path d="M2 2.500c2 2 2 9 0 11M14 2.500c-2 2-2 9 0 11M8 4v8"/></svg>
<div style="left:1429px;top:221px;width:10.3px;height:11.5px;background:#2c2c2c;border-radius:3px"></div>
<span style="left:1431.89px;top:220.60px;font-size:8.3px;line-height:13px;font-weight:700;color:#fff;">6</span>
<div style="left:1473px;top:218px;width:1px;height:17.3px;background:#2c2c2c"></div>
<svg style="left:1479.05px;top:224.25px;color:#fff;" width="5.5" height="5.5" viewBox="0 0 16 16" fill="none" stroke="currentColor" stroke-width="2.7" stroke-linecap="round" stroke-linejoin="round"><path d="M3.500 6l4.500 4.500L12.500 6"/></svg>
<svg style="left:1501.00px;top:221.70px;color:#fff;" width="10" height="10" viewBox="0 0 16 16" fill="none" stroke="currentColor" stroke-width="1.4" stroke-linecap="round" stroke-linejoin="round"><path d="M3.200 1v6.200M3.200 12.600V15M12.800 1v2.600M12.800 9v6"/><path d="M3.200 7.200l2.700 2.700-2.700 2.700L.5 9.900zM12.800 3.600l2.700 2.700-2.700 2.700-2.700-2.700z"/></svg>
<div style="left:1325px;top:264.5px;width:81px;height:17.3px;background:#383838;border-radius:4px"></div>
<div style="left:1412px;top:264.5px;width:79.7px;height:17.3px;background:#383838;border-radius:4px"></div>
<svg style="left:1330.05px;top:269.45px;color:#b5b5b5;" width="7.5" height="7.5" viewBox="0 0 16 16" fill="none" stroke="currentColor" stroke-width="1.5" stroke-linecap="round" stroke-linejoin="round"><path d="M2 2.500v11M14 2.500v11"/><rect x="5.500" y="5.500" width="5" height="5" rx="1"/></svg>
<div style="left:1343px;top:267.3px;width:15px;height:11.7px;background:#2c2c2c;border-radius:3px"></div>
<span style="left:1345.88px;top:267.00px;font-size:8.3px;line-height:13px;font-weight:700;color:#fff;">16</span>
<svg style="left:1416.75px;top:269.45px;color:#b5b5b5;" width="7.5" height="7.5" viewBox="0 0 16 16" fill="none" stroke="currentColor" stroke-width="1.5" stroke-linecap="round" stroke-linejoin="round"><path d="M2.500 2h11M2.500 14h11"/><rect x="5.500" y="5.500" width="5" height="5" rx="1"/></svg>
<div style="left:1429.5px;top:267.3px;width:15px;height:11.7px;background:#2c2c2c;border-radius:3px"></div>
<span style="left:1432.38px;top:267.00px;font-size:8.3px;line-height:13px;font-weight:700;color:#fff;">12</span>
<svg style="left:1501.25px;top:268.45px;color:#fff;" width="9.5" height="9.5" viewBox="0 0 16 16" fill="none" stroke="currentColor" stroke-width="1.4" stroke-linecap="round" stroke-linejoin="round"><path d="M5.500 2h5M5.500 14h5M2 5.500v5M14 5.500v5"/><rect x="4" y="4" width="8" height="8" rx="1.500"/></svg>
<div style="left:1325px;top:290px;width:12px;height:12px;background:#383838;border:1px solid #474747;border-radius:3px;box-sizing:border-box"></div>
<span style="left:1343.00px;top:290.10px;font-size:8.3px;line-height:13px;color:#fff;letter-spacing:0.222px;">Clip content</span>
<div style="left:1315px;top:316px;width:204px;height:1px;background:#3e3e3e"></div>
<span style="left:1325.50px;top:325.80px;font-size:8.3px;line-height:13px;font-weight:700;color:#fff;letter-spacing:-0.102px;">Appearance</span>
<svg style="left:1479.80px;top:326.50px;color:#fff;" width="11" height="11" viewBox="0 0 16 16" fill="none" stroke="currentColor" stroke-width="1.3" stroke-linecap="round" stroke-linejoin="round"><path d="M1.200 8C3 4.600 5.500 3.200 8 3.200S13 4.600 14.800 8C13 11.400 10.500 12.800 8 12.800S3 11.400 1.200 8z"/><circle cx="8" cy="8" r="2.300"/></svg>
<svg style="left:1501.00px;top:327.00px;color:#fff;" width="10" height="10" viewBox="0 0 16 16" fill="none" stroke="currentColor" stroke-width="1.3" stroke-linecap="round" stroke-linejoin="round"><path d="M8 1.500c3 3.500 4.500 5.800 4.500 8a4.500 4.500 0 0 1-9 0c0-2.200 1.500-4.500 4.500-8z"/></svg>
<div style="left:1325px;top:349px;width:80.7px;height:17.3px;background:#383838;border-radius:4px"></div>
<div style="left:1412px;top:349px;width:79.7px;height:17.3px;background:#383838;border-radius:4px"></div>
<svg style="left:1330.05px;top:353.45px;color:#cfcfcf;" width="8.5" height="8.5" viewBox="0 0 16 16" fill="none" stroke="currentColor" stroke-width="1.3" stroke-linecap="round" stroke-linejoin="round"><rect x="2" y="2" width="12" height="12" rx="2.500"/><rect x="5.500" y="5.500" width="5" height="5" fill="currentColor" stroke="none" opacity=".6"/></svg>
<span style="left:1343.30px;top:351.60px;font-size:8.3px;line-height:13px;font-weight:700;color:#fff;letter-spacing:-0.132px;">100%</span>
<svg style="left:1415.80px;top:353.20px;color:#cfcfcf;" width="9" height="9" viewBox="0 0 16 16" fill="none" stroke="currentColor" stroke-width="1.4" stroke-linecap="round" stroke-linejoin="round"><path d="M2 6V4.500A2.500 2.500 0 0 1 4.500 2H6M10 2h1.500A2.500 2.500 0 0 1 14 4.500V6M14 10v1.500a2.500 2.500 0 0 1-2.500 2.500H10M6 14H4.500A2.500 2.500 0 0 1 2 11.500V10"/></svg>
<div style="left:1429.5px;top:352px;width:15px;height:11.5px;background:#2c2c2c;border-radius:3px"></div>
<span style="left:1432.38px;top:351.60px;font-size:8.3px;line-height:13px;font-weight:700;color:#fff;">20</span>
<svg style="left:1500.75px;top:352.45px;color:#fff;" width="10.5" height="10.5" viewBox="0 0 16 16" fill="none" stroke="currentColor" stroke-width="1.4" stroke-linecap="round" stroke-linejoin="round"><path d="M2 6V4.500A2.500 2.500 0 0 1 4.500 2H6M10 2h1.500A2.500 2.500 0 0 1 14 4.500V6M14 10v1.500a2.500 2.500 0 0 1-2.500 2.500H10M6 14H4.500A2.500 2.500 0 0 1 2 11.500V10"/></svg>
<div style="left:1315px;top:378px;width:204px;height:1px;background:#3e3e3e"></div>
<span style="left:1325.50px;top:387.30px;font-size:8.3px;line-height:13px;font-weight:700;color:#fff;letter-spacing:-0.572px;">Fill</span>
<svg style="left:1480.85px;top:388.75px;color:#fff;" width="9.5" height="9.5" viewBox="0 0 16 16" fill="none" stroke="currentColor" stroke-width="1.4" stroke-linecap="round" stroke-linejoin="round"><circle cx="4.300" cy="4.300" r="2.100"/><circle cx="11.700" cy="4.300" r="2.100"/><circle cx="4.300" cy="11.700" r="2.100"/><circle cx="11.700" cy="11.700" r="2.100"/></svg>
<svg style="left:1501.75px;top:389.25px;color:#fff;" width="8.5" height="8.5" viewBox="0 0 16 16" fill="none" stroke="currentColor" stroke-width="1.3" stroke-linecap="round" stroke-linejoin="round"><path d="M8 2v12M2 8h12"/></svg>
<div style="left:1325px;top:410.9px;width:146px;height:17.3px;border:1px solid #474747;border-radius:4px;box-sizing:border-box"></div>
<div style="left:1329px;top:414.5px;width:10px;height:10px;background:#3a3a3a;border-radius:1.500px;box-shadow:0 0 0 .5px #555"></div>
<span style="left:1342.60px;top:413.40px;font-size:8.3px;line-height:13px;font-weight:700;color:#fff;letter-spacing:-0.110px;">Color/Component/Button/Prim...</span>
<svg style="left:1480.10px;top:414.00px;color:#fff;" width="11" height="11" viewBox="0 0 16 16" fill="none" stroke="currentColor" stroke-width="1.3" stroke-linecap="round" stroke-linejoin="round"><path d="M1.200 8C3 4.600 5.500 3.200 8 3.200S13 4.600 14.800 8C13 11.400 10.500 12.800 8 12.800S3 11.400 1.200 8z"/><circle cx="8" cy="8" r="2.300"/></svg>
<svg style="left:1501.75px;top:415.25px;color:#fff;" width="8.5" height="8.5" viewBox="0 0 16 16" fill="none" stroke="currentColor" stroke-width="1.3" stroke-linecap="round" stroke-linejoin="round"><path d="M2.500 8h11"/></svg>
<div style="left:1315px;top:440.3px;width:204px;height:1px;background:#3e3e3e"></div>
<span style="left:1325.50px;top:448.80px;font-size:8.3px;line-height:13px;font-weight:700;color:#fff;letter-spacing:-0.222px;">Stroke</span>
<svg style="left:1480.85px;top:450.25px;color:#fff;" width="9.5" height="9.5" viewBox="0 0 16 16" fill="none" stroke="currentColor" stroke-width="1.4" stroke-linecap="round" stroke-linejoin="round"><circle cx="4.300" cy="4.300" r="2.100"/><circle cx="11.700" cy="4.300" r="2.100"/><circle cx="4.300" cy="11.700" r="2.100"/><circle cx="11.700" cy="11.700" r="2.100"/></svg>
<svg style="left:1501.75px;top:450.75px;color:#fff;" width="8.5" height="8.5" viewBox="0 0 16 16" fill="none" stroke="currentColor" stroke-width="1.3" stroke-linecap="round" stroke-linejoin="round"><path d="M8 2v12M2 8h12"/></svg>
<div style="left:1325px;top:472.4px;width:146px;height:17.3px;border:1px solid #474747;border-radius:4px;box-sizing:border-box"></div>
<div style="left:1329px;top:476px;width:10px;height:10px;background:#000;border-radius:1.500px;box-shadow:0 0 0 .5px #555"></div>
<span style="left:1342.60px;top:474.90px;font-size:8.3px;line-height:13px;font-weight:700;color:#fff;letter-spacing:-0.110px;">Color/Component/Button/Prim...</span>
<svg style="left:1480.10px;top:475.50px;color:#fff;" width="11" height="11" viewBox="0 0 16 16" fill="none" stroke="currentColor" stroke-width="1.3" stroke-linecap="round" stroke-linejoin="round"><path d="M1.200 8C3 4.600 5.500 3.200 8 3.200S13 4.600 14.800 8C13 11.400 10.500 12.800 8 12.800S3 11.400 1.200 8z"/><circle cx="8" cy="8" r="2.300"/></svg>
<svg style="left:1501.75px;top:476.75px;color:#fff;" width="8.5" height="8.5" viewBox="0 0 16 16" fill="none" stroke="currentColor" stroke-width="1.3" stroke-linecap="round" stroke-linejoin="round"><path d="M2.500 8h11"/></svg>
<div style="left:1325px;top:496px;width:70.8px;height:17.3px;border:1px solid #474747;border-radius:4px;box-sizing:border-box"></div>
<span style="left:1331.70px;top:498.40px;font-size:8.3px;line-height:13px;font-weight:700;color:#fff;letter-spacing:-0.247px;">Inside</span>
<svg style="left:1383.25px;top:502.25px;color:#fff;" width="5.5" height="5.5" viewBox="0 0 16 16" fill="none" stroke="currentColor" stroke-width="2.7" stroke-linecap="round" stroke-linejoin="round"><path d="M3.500 6l4.500 4.500L12.500 6"/></svg>
<div style="left:1401.7px;top:496px;width:69.3px;height:17.3px;background:#383838;border-radius:4px"></div>
<svg style="left:1405.55px;top:499.85px;color:#cfcfcf;" width="9.5" height="9.5" viewBox="0 0 16 16" fill="none" stroke="currentColor" stroke-width="1.3" stroke-linecap="round" stroke-linejoin="round"><path d="M2 3.500h12" stroke-width="1.200"/><rect x="2" y="6" width="12" height="3" rx=".8"/><rect x="2" y="11" width="12" height="3.500" rx=".8"/></svg>
<div style="left:1419.6px;top:498.8px;width:8.6px;height:11.6px;background:#2c2c2c;border-radius:3px"></div>
<span style="left:1421.59px;top:498.40px;font-size:8.3px;line-height:13px;font-weight:700;color:#fff;">1</span>
<svg style="left:1480.60px;top:499.60px;color:#fff;" width="10" height="10" viewBox="0 0 16 16" fill="none" stroke="currentColor" stroke-width="1.4" stroke-linecap="round" stroke-linejoin="round"><path d="M3.200 1v6.200M3.200 12.600V15M12.800 1v2.600M12.800 9v6"/><path d="M3.200 7.200l2.700 2.700-2.700 2.700L.5 9.900zM12.800 3.600l2.700 2.700-2.700 2.700-2.700-2.700z"/></svg>
<svg style="left:1501.00px;top:499.60px;color:#fff;" width="10" height="10" viewBox="0 0 16 16" fill="none" stroke="currentColor" stroke-width="1.4" stroke-linecap="round" stroke-linejoin="round"><rect x="2" y="2" width="12" height="12" rx="2"/><rect x="5" y="5" width="6" height="6" fill="currentColor" stroke="none"/></svg>
</div>
<div style="left:275px;top:692.3px;width:1119px;height:1.3px;background:#f6f6f6"></div>
<div style="left:1394px;top:692.3px;width:205px;height:1.3px;background:#3a3a3a"></div>
<div style="left:275px;top:693.6px;width:1324px;height:3px;background:#0b0909"></div>
</body></html>
